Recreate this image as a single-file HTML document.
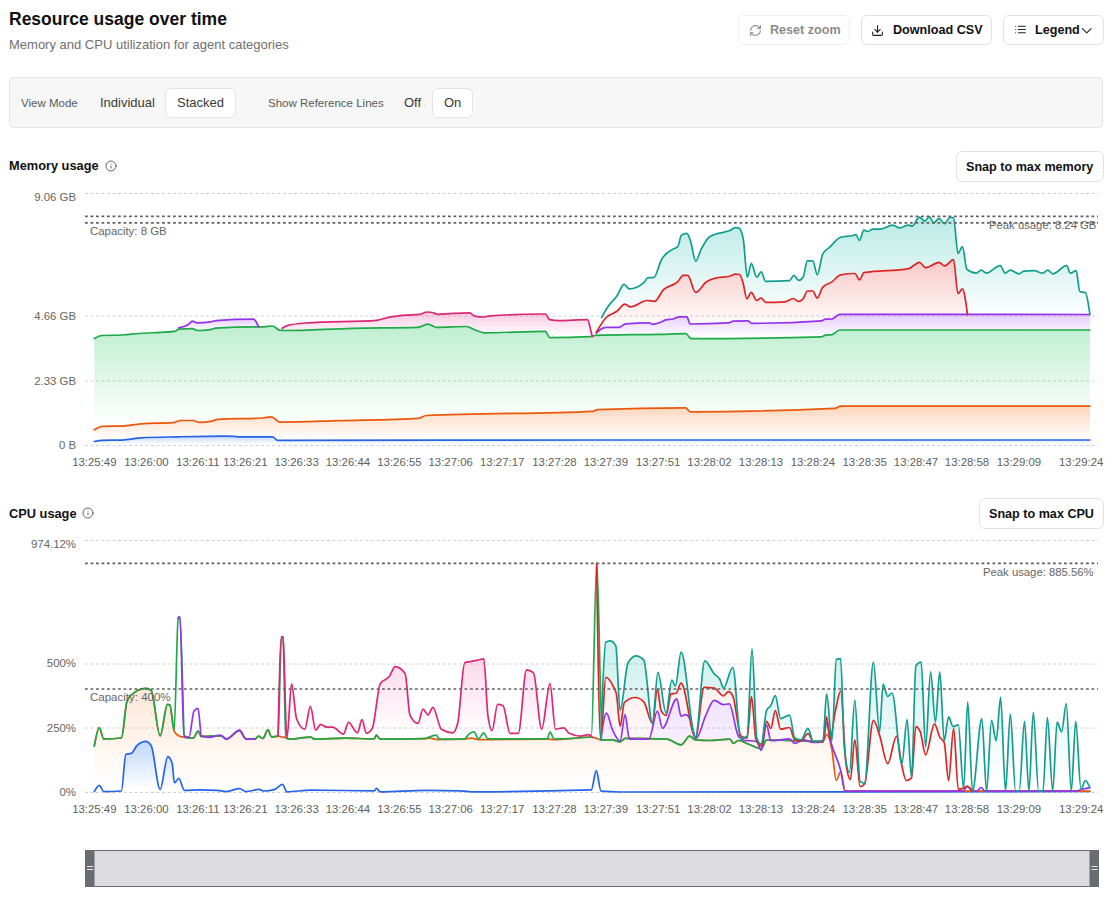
<!DOCTYPE html>
<html><head><meta charset="utf-8">
<style>
html,body{margin:0;padding:0;background:#fff;width:1116px;height:906px;overflow:hidden;position:relative;font-family:"Liberation Sans",sans-serif;}
.a{position:absolute;white-space:nowrap;}
.btn{position:absolute;box-sizing:border-box;border:1px solid #e2e2e2;border-radius:6px;background:#fff;font-weight:700;font-size:12.6px;color:#111;}
.btn span{position:absolute;white-space:nowrap;}
.yl{position:absolute;font-size:11.4px;color:#666;text-align:right;width:70px;left:6px;}
.xl{position:absolute;font-size:11.4px;color:#606060;transform:translateX(-50%);}
</style></head><body>
<!-- header -->
<div class="a" style="left:9px;top:9px;font-size:17.5px;font-weight:700;color:#111;">Resource usage over time</div>
<div class="a" style="left:9px;top:36.6px;font-size:13px;color:#707070;">Memory and CPU utilization for agent categories</div>

<div class="btn" style="left:738px;top:15px;width:112px;height:30px;border-color:#efefef;">
  <svg style="position:absolute;left:10px;top:7.6px" width="13" height="13" viewBox="0 0 24 24" fill="none" stroke="#8e8e8e" stroke-width="2" stroke-linecap="round" stroke-linejoin="round"><path d="M3 12a9 9 0 0 1 9-9 9.75 9.75 0 0 1 6.74 2.74L21 8"/><path d="M21 3v5h-5"/><path d="M21 12a9 9 0 0 1-9 9 9.75 9.75 0 0 1-6.74-2.74L3 16"/><path d="M8 16H3v5"/></svg>
  <span style="left:31px;top:7px;color:#8c8c8c;">Reset zoom</span>
</div>
<div class="btn" style="left:861px;top:15px;width:131px;height:30px;">
  <svg style="position:absolute;left:9.2px;top:8px" width="13" height="13" viewBox="0 0 24 24" fill="none" stroke="#222" stroke-width="2" stroke-linecap="round" stroke-linejoin="round"><path d="M21 15v4a2 2 0 0 1-2 2H5a2 2 0 0 1-2-2v-4"/><path d="M7 10l5 5 5-5"/><path d="M12 15V3"/></svg>
  <span style="left:31px;top:7px;">Download CSV</span>
</div>
<div class="btn" style="left:1003px;top:15px;width:101px;height:30px;">
  <svg style="position:absolute;left:10px;top:7.3px" width="13" height="13" viewBox="0 0 24 24" fill="none" stroke="#222" stroke-width="2" stroke-linecap="round" stroke-linejoin="round"><path d="M8 6h13M8 12h13M8 18h13M3 6h.01M3 12h.01M3 18h.01"/></svg>
  <span style="left:31px;top:7px;">Legend</span>
  <svg style="position:absolute;left:73.6px;top:6px" width="17.5" height="17.5" viewBox="0 0 24 24" fill="none" stroke="#222" stroke-width="1.5" stroke-linecap="round" stroke-linejoin="round"><path d="m6 9 6 6 6-6"/></svg>
</div>

<!-- control panel -->
<div class="a" style="left:9px;top:77px;width:1094px;height:51px;box-sizing:border-box;border:1px solid #e4e4e4;border-radius:5px;background:#f7f7f7;"></div>
<div class="a" style="left:21px;top:97px;font-size:11.5px;color:#5a5a5a;">View Mode</div>
<div class="a" style="left:100px;top:95px;font-size:13px;color:#3a3a3a;">Individual</div>
<div class="a" style="left:165px;top:88px;width:71px;height:30px;box-sizing:border-box;border:1px solid #e4e4e4;border-radius:6px;background:#fff;"></div>
<div class="a" style="left:177px;top:95px;font-size:13px;color:#3a3a3a;">Stacked</div>
<div class="a" style="left:268px;top:97px;font-size:11.5px;color:#5a5a5a;">Show Reference Lines</div>
<div class="a" style="left:404px;top:95px;font-size:13px;color:#3a3a3a;">Off</div>
<div class="a" style="left:432px;top:88px;width:41px;height:30px;box-sizing:border-box;border:1px solid #e4e4e4;border-radius:6px;background:#fff;"></div>
<div class="a" style="left:444px;top:95px;font-size:13px;color:#3a3a3a;">On</div>

<!-- memory header -->
<div class="a" style="left:9px;top:158px;font-size:12.8px;font-weight:700;color:#111;">Memory usage</div>
<svg class="a" style="left:105px;top:160px" width="12" height="12" viewBox="0 0 24 24" fill="none" stroke="#555" stroke-width="1.8" stroke-linecap="round" stroke-linejoin="round"><circle cx="12" cy="12" r="10"/><path d="M12 16v-4M12 8h.01"/></svg>
<div class="btn" style="left:956px;top:151px;width:148px;height:31px;"><span style="left:9px;top:7.8px;">Snap to max memory</span></div>

<!-- cpu header -->
<div class="a" style="left:9px;top:506px;font-size:12.8px;font-weight:700;color:#111;">CPU usage</div>
<svg class="a" style="left:82px;top:507px" width="12" height="12" viewBox="0 0 24 24" fill="none" stroke="#555" stroke-width="1.8" stroke-linecap="round" stroke-linejoin="round"><circle cx="12" cy="12" r="10"/><path d="M12 16v-4M12 8h.01"/></svg>
<div class="btn" style="left:979px;top:498px;width:125px;height:31px;"><span style="left:9px;top:7.8px;">Snap to max CPU</span></div>

<!-- CHARTS -->
<svg class="a" style="left:0;top:0" width="1116" height="906" viewBox="0 0 1116 906">
<g id="grid" stroke="#d0d0d0" stroke-width="1" stroke-dasharray="3 2.5">
  <path d="M85 193.5H1098M85 316H1098M85 381H1098M85 445.5H1098"/>
  <path d="M85 540.5H1098M85 664H1098M85 728H1098M85 792.5H1098"/>
</g>
<g><defs><linearGradient id="g_blue" x1="0" y1="0" x2="0" y2="1"><stop offset="0.05" stop-color="#3b82f6" stop-opacity="0.28"/><stop offset="0.95" stop-color="#3b82f6" stop-opacity="0"/></linearGradient><linearGradient id="c_blue" x1="0" y1="0" x2="0" y2="1"><stop offset="0.05" stop-color="#3b82f6" stop-opacity="0.3"/><stop offset="0.95" stop-color="#3b82f6" stop-opacity="0"/></linearGradient><linearGradient id="g_orange" x1="0" y1="0" x2="0" y2="1"><stop offset="0.05" stop-color="#f97316" stop-opacity="0.28"/><stop offset="0.95" stop-color="#f97316" stop-opacity="0"/></linearGradient><linearGradient id="c_orange" x1="0" y1="0" x2="0" y2="1"><stop offset="0.05" stop-color="#f97316" stop-opacity="0.16"/><stop offset="0.95" stop-color="#f97316" stop-opacity="0"/></linearGradient><linearGradient id="g_green" x1="0" y1="0" x2="0" y2="1"><stop offset="0.05" stop-color="#22c55e" stop-opacity="0.28"/><stop offset="0.95" stop-color="#22c55e" stop-opacity="0"/></linearGradient><linearGradient id="c_green" x1="0" y1="0" x2="0" y2="1"><stop offset="0.05" stop-color="#22c55e" stop-opacity="0.25"/><stop offset="0.95" stop-color="#22c55e" stop-opacity="0"/></linearGradient><linearGradient id="g_purple" x1="0" y1="0" x2="0" y2="1"><stop offset="0.05" stop-color="#a855f7" stop-opacity="0.28"/><stop offset="0.95" stop-color="#a855f7" stop-opacity="0"/></linearGradient><linearGradient id="c_purple" x1="0" y1="0" x2="0" y2="1"><stop offset="0.05" stop-color="#a855f7" stop-opacity="0.18"/><stop offset="0.95" stop-color="#a855f7" stop-opacity="0"/></linearGradient><linearGradient id="g_pink" x1="0" y1="0" x2="0" y2="1"><stop offset="0.05" stop-color="#ec4899" stop-opacity="0.28"/><stop offset="0.95" stop-color="#ec4899" stop-opacity="0"/></linearGradient><linearGradient id="c_pink" x1="0" y1="0" x2="0" y2="1"><stop offset="0.05" stop-color="#ec4899" stop-opacity="0.26"/><stop offset="0.95" stop-color="#ec4899" stop-opacity="0"/></linearGradient><linearGradient id="g_red" x1="0" y1="0" x2="0" y2="1"><stop offset="0.05" stop-color="#ef4444" stop-opacity="0.28"/><stop offset="0.95" stop-color="#ef4444" stop-opacity="0"/></linearGradient><linearGradient id="c_red" x1="0" y1="0" x2="0" y2="1"><stop offset="0.05" stop-color="#ef4444" stop-opacity="0.18"/><stop offset="0.95" stop-color="#ef4444" stop-opacity="0"/></linearGradient><linearGradient id="g_teal" x1="0" y1="0" x2="0" y2="1"><stop offset="0.05" stop-color="#14b8a6" stop-opacity="0.28"/><stop offset="0.95" stop-color="#14b8a6" stop-opacity="0"/></linearGradient><linearGradient id="c_teal" x1="0" y1="0" x2="0" y2="1"><stop offset="0.05" stop-color="#14b8a6" stop-opacity="0.21"/><stop offset="0.95" stop-color="#14b8a6" stop-opacity="0"/></linearGradient></defs><path d="M94.30 441.50 C97.03 440.93 99.77 440.36 102.50 440.30 C109.10 440.17 115.70 440.23 122.30 440.10 C128.53 439.97 134.77 438.14 141.00 437.80 C153.40 437.13 165.80 437.07 178.20 436.80 C193.77 436.46 209.33 436.10 224.90 436.10 C228.00 436.10 231.10 436.20 234.20 436.40 C235.77 436.50 237.33 436.80 238.90 436.80 C250.13 436.80 261.37 436.80 272.60 436.80 C274.17 436.80 275.73 440.30 277.30 440.30 C382.87 440.30 488.43 440.00 594.00 440.00 C759.30 440.00 924.60 440.00 1089.90 440.00 L1089.90 445.00 C758.03 445.00 426.17 445.00 94.30 445.00 Z" fill="url(#g_blue)" stroke="none"/><path d="M94.30 429.80 C97.03 428.08 99.77 426.36 102.50 426.30 C109.10 426.17 115.70 426.23 122.30 426.10 C128.53 425.97 134.77 424.26 141.00 423.80 C151.87 423.00 162.73 423.40 173.60 422.60 C175.93 422.43 178.27 420.50 180.60 420.50 C184.87 420.50 189.13 420.50 193.40 420.50 C195.33 420.50 197.27 422.40 199.20 422.40 C203.10 422.40 207.00 422.07 210.90 421.40 C213.23 421.00 215.57 419.44 217.90 419.30 C232.67 418.43 247.43 418.87 262.20 418.00 C265.30 417.82 268.40 416.80 271.50 416.80 C274.20 416.80 276.90 422.10 279.60 422.10 C299.73 422.10 319.87 421.14 340.00 420.60 C366.03 419.90 392.07 419.83 418.10 418.30 C420.80 418.14 423.50 415.64 426.20 415.50 C481.77 412.70 537.33 414.10 592.90 411.30 C594.47 411.22 596.03 409.66 597.60 409.60 C626.93 408.40 656.27 407.80 685.60 407.80 C687.13 407.80 688.67 411.80 690.20 411.80 C738.40 411.80 786.60 410.63 834.80 408.30 C836.73 408.21 838.67 406.10 840.60 406.10 C923.70 406.10 1006.80 406.10 1089.90 406.10 L1089.90 440.00 C924.60 440.00 759.30 440.00 594.00 440.00 C488.43 440.00 382.87 440.30 277.30 440.30 C275.73 440.30 274.17 436.80 272.60 436.80 C261.37 436.80 250.13 436.80 238.90 436.80 C237.33 436.80 235.77 436.50 234.20 436.40 C231.10 436.20 228.00 436.10 224.90 436.10 C209.33 436.10 193.77 436.46 178.20 436.80 C165.80 437.07 153.40 437.13 141.00 437.80 C134.77 438.14 128.53 439.97 122.30 440.10 C115.70 440.23 109.10 440.17 102.50 440.30 C99.77 440.36 97.03 440.93 94.30 441.50 Z" fill="url(#g_orange)" stroke="none"/><path d="M94.30 338.50 C96.87 337.06 99.43 335.62 102.00 335.50 C108.87 335.17 115.73 335.33 122.60 335.00 C128.00 334.74 133.40 333.91 138.80 333.50 C145.97 332.95 153.13 332.73 160.30 332.30 C165.07 332.01 169.83 332.00 174.60 331.40 C176.07 331.22 177.53 329.31 179.00 329.20 C183.50 328.87 188.00 328.70 192.50 328.70 C194.00 328.70 195.50 330.50 197.00 330.50 C201.47 330.50 205.93 330.20 210.40 329.60 C212.20 329.36 214.00 328.21 215.80 328.10 C228.93 327.30 242.07 326.90 255.20 326.90 C258.20 326.90 261.20 326.90 264.20 326.90 C266.60 326.90 269.00 326.00 271.40 326.00 C272.27 326.00 273.13 326.20 274.00 326.50 C275.80 327.12 277.60 329.84 279.40 330.10 C281.27 330.37 283.13 330.50 285.00 330.50 C307.23 330.50 329.47 328.82 351.70 328.30 C373.80 327.79 395.90 328.00 418.00 327.40 C421.27 327.31 424.53 324.20 427.80 324.20 C430.80 324.20 433.80 327.40 436.80 327.40 C446.67 327.40 456.53 326.50 466.40 326.50 C469.40 326.50 472.40 329.05 475.40 330.10 C478.37 331.14 481.33 332.80 484.30 332.80 C504.63 332.80 524.97 331.40 545.30 331.40 C546.77 331.40 548.23 337.60 549.70 337.60 C563.13 337.60 576.57 337.30 590.00 336.70 C591.80 336.62 593.60 335.36 595.40 335.30 C616.93 334.63 638.47 334.75 660.00 334.30 C668.60 334.12 677.20 333.70 685.80 333.70 C687.60 333.70 689.40 338.60 691.20 338.60 C734.57 338.60 777.93 338.03 821.30 336.90 C822.73 336.86 824.17 335.42 825.60 335.20 C827.73 334.87 829.87 335.03 832.00 334.70 C834.53 334.30 837.07 330.00 839.60 330.00 C923.03 330.00 1006.47 330.00 1089.90 330.00 L1089.90 406.10 C1006.80 406.10 923.70 406.10 840.60 406.10 C838.67 406.10 836.73 408.21 834.80 408.30 C786.60 410.63 738.40 411.80 690.20 411.80 C688.67 411.80 687.13 407.80 685.60 407.80 C656.27 407.80 626.93 408.40 597.60 409.60 C596.03 409.66 594.47 411.22 592.90 411.30 C537.33 414.10 481.77 412.70 426.20 415.50 C423.50 415.64 420.80 418.14 418.10 418.30 C392.07 419.83 366.03 419.90 340.00 420.60 C319.87 421.14 299.73 422.10 279.60 422.10 C276.90 422.10 274.20 416.80 271.50 416.80 C268.40 416.80 265.30 417.82 262.20 418.00 C247.43 418.87 232.67 418.43 217.90 419.30 C215.57 419.44 213.23 421.00 210.90 421.40 C207.00 422.07 203.10 422.40 199.20 422.40 C197.27 422.40 195.33 420.50 193.40 420.50 C189.13 420.50 184.87 420.50 180.60 420.50 C178.27 420.50 175.93 422.43 173.60 422.60 C162.73 423.40 151.87 423.00 141.00 423.80 C134.77 424.26 128.53 425.97 122.30 426.10 C115.70 426.23 109.10 426.17 102.50 426.30 C99.77 426.36 97.03 428.08 94.30 429.80 Z" fill="url(#g_green)" stroke="none"/><path d="M178.60 327.80 C181.73 327.26 184.87 326.73 188.00 324.70 C189.50 323.73 191.00 321.10 192.50 321.10 C194.00 321.10 195.50 322.80 197.00 322.80 C201.47 322.80 205.93 322.50 210.40 321.90 C212.20 321.66 214.00 320.73 215.80 320.60 C228.37 319.67 240.93 319.20 253.50 319.20 C254.33 319.20 255.17 320.22 256.00 321.50 C256.83 322.78 257.67 324.84 258.50 326.90 L258.50 326.90 C257.40 326.90 256.30 326.90 255.20 326.90 C242.07 326.90 228.93 327.30 215.80 328.10 C214.00 328.21 212.20 329.36 210.40 329.60 C205.93 330.20 201.47 330.50 197.00 330.50 C195.50 330.50 194.00 328.70 192.50 328.70 C188.00 328.70 183.50 328.87 179.00 329.20 C178.87 329.21 178.73 329.30 178.60 329.40 Z" fill="url(#g_purple)" stroke="none"/><path d="M596.30 333.20 C597.80 331.68 599.30 330.16 600.80 329.20 C602.57 328.08 604.33 327.40 606.10 327.40 C610.30 327.40 614.50 327.40 618.70 327.40 C621.07 327.40 623.43 323.98 625.80 323.80 C633.57 323.20 641.33 322.90 649.10 322.90 C650.30 322.90 651.50 324.30 652.70 324.30 C655.13 324.30 657.57 323.34 660.00 322.50 C662.17 321.75 664.33 320.17 666.50 319.70 C668.63 319.23 670.77 319.46 672.90 319.00 C675.07 318.53 677.23 316.90 679.40 316.90 C681.90 316.90 684.40 316.90 686.90 316.90 C687.97 316.90 689.03 324.00 690.10 324.00 C703.00 324.00 715.90 323.63 728.80 322.90 C730.23 322.82 731.67 321.28 733.10 321.20 C738.13 320.93 743.17 320.80 748.20 320.80 C749.27 320.80 750.33 323.30 751.40 323.30 C774.70 323.30 798.00 322.47 821.30 320.80 C822.73 320.70 824.17 319.29 825.60 319.20 C827.73 319.07 829.87 319.13 832.00 319.00 C834.53 318.84 837.07 314.30 839.60 314.30 C923.03 314.30 1006.47 314.40 1089.90 314.50 L1089.90 330.00 C1006.47 330.00 923.03 330.00 839.60 330.00 C837.07 330.00 834.53 334.30 832.00 334.70 C829.87 335.03 827.73 334.87 825.60 335.20 C824.17 335.42 822.73 336.86 821.30 336.90 C777.93 338.03 734.57 338.60 691.20 338.60 C689.40 338.60 687.60 333.70 685.80 333.70 C677.20 333.70 668.60 334.12 660.00 334.30 C638.77 334.75 617.53 335.02 596.30 335.29 Z" fill="url(#g_purple)" stroke="none"/><path d="M282.20 328.30 C283.87 327.18 285.53 326.06 287.20 325.60 C293.77 323.80 300.33 323.39 306.90 322.90 C330.20 321.17 353.50 322.03 376.80 320.30 C380.37 320.03 383.93 318.34 387.50 317.60 C393.47 316.36 399.43 315.76 405.40 315.20 C410.20 314.75 415.00 314.90 419.80 314.30 C422.20 314.00 424.60 312.00 427.00 312.00 C428.77 312.00 430.53 312.17 432.30 312.50 C434.10 312.84 435.90 314.30 437.70 314.30 C441.90 314.30 446.10 313.80 450.30 313.60 C456.87 313.29 463.43 312.90 470.00 312.90 C471.50 312.90 473.00 315.82 474.50 316.10 C477.77 316.70 481.03 317.00 484.30 317.00 C485.50 317.00 486.70 316.19 487.90 316.10 C505.83 314.70 523.77 314.00 541.70 314.00 C542.90 314.00 544.10 314.00 545.30 314.00 C546.77 314.00 548.23 319.43 549.70 319.70 C553.00 320.30 556.30 320.60 559.60 320.60 C568.87 320.60 578.13 319.70 587.40 319.70 C588.90 319.70 590.40 330.33 591.90 334.90 C592.10 335.51 592.30 336.10 592.50 336.70 L592.50 336.05 C591.67 336.36 590.83 336.66 590.00 336.70 C576.57 337.30 563.13 337.60 549.70 337.60 C548.23 337.60 546.77 331.40 545.30 331.40 C524.97 331.40 504.63 332.80 484.30 332.80 C481.33 332.80 478.37 331.14 475.40 330.10 C472.40 329.05 469.40 326.50 466.40 326.50 C456.53 326.50 446.67 327.40 436.80 327.40 C433.80 327.40 430.80 324.20 427.80 324.20 C424.53 324.20 421.27 327.31 418.00 327.40 C395.90 328.00 373.80 327.79 351.70 328.30 C329.47 328.82 307.23 330.50 285.00 330.50 C284.07 330.50 283.13 330.40 282.20 330.30 Z" fill="url(#g_pink)" stroke="none"/><path d="M596.30 332.30 C599.57 326.64 602.83 320.98 606.10 317.50 C609.70 313.67 613.30 314.04 616.90 311.30 C619.57 309.27 622.23 304.10 624.90 304.10 C626.70 304.10 628.50 306.80 630.30 306.80 C635.97 306.80 641.63 300.50 647.30 300.50 C649.70 300.50 652.10 301.40 654.50 301.40 C657.50 301.40 660.50 292.74 663.50 289.70 C668.27 284.87 673.03 286.47 677.80 281.70 C679.60 279.90 681.40 275.40 683.20 275.40 C684.70 275.40 686.20 275.40 687.70 275.40 C690.37 275.40 693.03 292.40 695.70 292.40 C699.30 292.40 702.90 284.11 706.50 281.70 C709.47 279.71 712.43 278.84 715.40 278.10 C720.20 276.90 725.00 277.50 729.80 276.30 C731.60 275.85 733.40 274.20 735.20 274.20 C736.67 274.20 738.13 274.30 739.60 274.50 C740.80 274.66 742.00 279.47 743.20 283.50 C744.40 287.53 745.60 298.70 746.80 298.70 C748.30 298.70 749.80 292.40 751.30 292.40 C753.10 292.40 754.90 300.50 756.70 300.50 C758.17 300.50 759.63 297.80 761.10 297.80 C762.60 297.80 764.10 302.30 765.60 302.30 C772.07 302.30 778.53 302.13 785.00 301.80 C787.70 301.66 790.40 298.50 793.10 298.50 C794.87 298.50 796.63 301.40 798.40 301.40 C799.90 301.40 801.40 300.63 802.90 299.10 C804.40 297.57 805.90 291.00 807.40 291.00 C809.20 291.00 811.00 291.00 812.80 291.00 C814.30 291.00 815.80 298.20 817.30 298.20 C819.07 298.20 820.83 289.48 822.60 287.40 C825.60 283.87 828.60 284.18 831.60 282.10 C834.60 280.02 837.60 275.49 840.60 274.90 C845.37 273.97 850.13 273.50 854.90 273.50 C856.40 273.50 857.90 279.90 859.40 279.90 C860.90 279.90 862.40 272.97 863.90 272.70 C878.83 269.97 893.77 271.33 908.70 268.60 C912.27 267.95 915.83 262.30 919.40 262.30 C921.50 262.30 923.60 267.70 925.70 267.70 C930.17 267.70 934.63 262.30 939.10 262.30 C940.90 262.30 942.70 265.90 944.50 265.90 C947.50 265.90 950.50 259.70 953.50 259.70 C955.00 259.70 956.50 293.70 958.00 293.70 C959.47 293.70 960.93 288.90 962.40 288.90 C964.10 288.90 965.80 301.75 967.50 314.60 L967.50 314.40 C924.87 314.35 882.23 314.30 839.60 314.30 C837.07 314.30 834.53 318.84 832.00 319.00 C829.87 319.13 827.73 319.07 825.60 319.20 C824.17 319.29 822.73 320.70 821.30 320.80 C798.00 322.47 774.70 323.30 751.40 323.30 C750.33 323.30 749.27 320.80 748.20 320.80 C743.17 320.80 738.13 320.93 733.10 321.20 C731.67 321.28 730.23 322.82 728.80 322.90 C715.90 323.63 703.00 324.00 690.10 324.00 C689.03 324.00 687.97 316.90 686.90 316.90 C684.40 316.90 681.90 316.90 679.40 316.90 C677.23 316.90 675.07 318.53 672.90 319.00 C670.77 319.46 668.63 319.23 666.50 319.70 C664.33 320.17 662.17 321.75 660.00 322.50 C657.57 323.34 655.13 324.30 652.70 324.30 C651.50 324.30 650.30 322.90 649.10 322.90 C641.33 322.90 633.57 323.20 625.80 323.80 C623.43 323.98 621.07 327.40 618.70 327.40 C614.50 327.40 610.30 327.40 606.10 327.40 C604.33 327.40 602.57 328.08 600.80 329.20 C599.30 330.16 597.80 331.68 596.30 333.20 Z" fill="url(#g_red)" stroke="none"/><path d="M601.60 317.50 C603.70 313.72 605.80 309.94 607.90 306.80 C610.90 302.32 613.90 300.33 616.90 296.00 C619.27 292.59 621.63 284.40 624.00 284.40 C625.80 284.40 627.60 288.90 629.40 288.90 C634.20 288.90 639.00 286.80 643.80 282.60 C645.27 281.32 646.73 277.70 648.20 277.70 C650.00 277.70 651.80 277.70 653.60 277.70 C656.30 277.70 659.00 263.87 661.70 259.30 C665.27 253.27 668.83 251.69 672.40 249.40 C674.20 248.24 676.00 248.50 677.80 246.70 C679.00 245.50 680.20 235.90 681.40 235.10 C683.20 233.90 685.00 233.30 686.80 233.30 C688.00 233.30 689.20 237.18 690.40 240.50 C692.17 245.38 693.93 261.10 695.70 261.10 C697.50 261.10 699.30 252.87 701.10 249.40 C703.50 244.77 705.90 240.23 708.30 237.80 C710.67 235.40 713.03 235.20 715.40 234.20 C720.20 232.17 725.00 232.87 729.80 230.60 C731.60 229.75 733.40 227.60 735.20 227.60 C736.37 227.60 737.53 227.70 738.70 227.90 C740.20 228.16 741.70 231.50 743.20 238.70 C744.57 245.26 745.93 277.20 747.30 277.20 C748.63 277.20 749.97 263.40 751.30 263.40 C753.10 263.40 754.90 277.20 756.70 277.20 C758.17 277.20 759.63 271.80 761.10 271.80 C762.60 271.80 764.10 281.30 765.60 281.30 C773.57 281.30 781.53 281.07 789.50 280.60 C791.00 280.51 792.50 275.30 794.00 275.30 C795.47 275.30 796.93 280.30 798.40 280.30 C799.90 280.30 801.40 279.40 802.90 277.60 C804.40 275.80 805.90 260.90 807.40 260.90 C809.20 260.90 811.00 260.90 812.80 260.90 C814.30 260.90 815.80 274.90 817.30 274.90 C819.07 274.90 820.83 257.83 822.60 254.30 C825.00 249.50 827.40 249.41 829.80 247.10 C833.40 243.63 837.00 238.34 840.60 237.30 C844.77 236.10 848.93 236.70 853.10 235.50 C854.00 235.24 854.90 234.60 855.80 234.60 C857.00 234.60 858.20 240.50 859.40 240.50 C860.90 240.50 862.40 230.10 863.90 230.10 C865.07 230.10 866.23 231.50 867.40 231.50 C869.20 231.50 871.00 229.20 872.80 229.20 C875.20 229.20 877.60 229.20 880.00 229.20 C884.17 229.20 888.33 225.10 892.50 225.10 C894.90 225.10 897.30 227.90 899.70 227.90 C902.70 227.90 905.70 225.10 908.70 225.10 C909.87 225.10 911.03 226.10 912.20 226.10 C914.60 226.10 917.00 217.20 919.40 217.20 C921.20 217.20 923.00 221.10 924.80 221.10 C926.30 221.10 927.80 216.60 929.30 216.60 C930.77 216.60 932.23 222.90 933.70 222.90 C935.50 222.90 937.30 218.40 939.10 218.40 C940.90 218.40 942.70 223.80 944.50 223.80 C946.30 223.80 948.10 217.50 949.90 217.50 C951.10 217.50 952.30 217.50 953.50 217.50 C955.00 217.50 956.50 253.40 958.00 253.40 C959.47 253.40 960.93 246.60 962.40 246.60 C963.90 246.60 965.40 268.19 966.90 269.40 C970.03 271.93 973.17 273.20 976.30 273.20 C977.97 273.20 979.63 270.10 981.30 270.10 C982.97 270.10 984.63 273.20 986.30 273.20 C990.93 273.20 995.57 265.70 1000.20 265.70 C1001.87 265.70 1003.53 273.20 1005.20 273.20 C1006.87 273.20 1008.53 270.10 1010.20 270.10 C1013.13 270.10 1016.07 273.80 1019.00 273.80 C1020.67 273.80 1022.33 271.23 1024.00 271.10 C1027.33 270.83 1030.67 270.70 1034.00 270.70 C1036.93 270.70 1039.87 273.20 1042.80 273.20 C1044.47 273.20 1046.13 270.10 1047.80 270.10 C1049.47 270.10 1051.13 273.80 1052.80 273.80 C1057.40 273.80 1062.00 265.70 1066.60 265.70 C1067.87 265.70 1069.13 273.20 1070.40 273.20 C1072.30 273.20 1074.20 270.70 1076.10 270.70 C1077.33 270.70 1078.57 290.84 1079.80 291.40 C1081.70 292.27 1083.60 291.83 1085.50 292.70 C1086.97 293.37 1088.43 303.98 1089.90 314.60 L1089.90 314.50 C1049.10 314.55 1008.30 314.60 967.50 314.60 C965.80 314.60 964.10 288.90 962.40 288.90 C960.93 288.90 959.47 293.70 958.00 293.70 C956.50 293.70 955.00 259.70 953.50 259.70 C950.50 259.70 947.50 265.90 944.50 265.90 C942.70 265.90 940.90 262.30 939.10 262.30 C934.63 262.30 930.17 267.70 925.70 267.70 C923.60 267.70 921.50 262.30 919.40 262.30 C915.83 262.30 912.27 267.95 908.70 268.60 C893.77 271.33 878.83 269.97 863.90 272.70 C862.40 272.97 860.90 279.90 859.40 279.90 C857.90 279.90 856.40 273.50 854.90 273.50 C850.13 273.50 845.37 273.97 840.60 274.90 C837.60 275.49 834.60 280.02 831.60 282.10 C828.60 284.18 825.60 283.87 822.60 287.40 C820.83 289.48 819.07 298.20 817.30 298.20 C815.80 298.20 814.30 291.00 812.80 291.00 C811.00 291.00 809.20 291.00 807.40 291.00 C805.90 291.00 804.40 297.57 802.90 299.10 C801.40 300.63 799.90 301.40 798.40 301.40 C796.63 301.40 794.87 298.50 793.10 298.50 C790.40 298.50 787.70 301.66 785.00 301.80 C778.53 302.13 772.07 302.30 765.60 302.30 C764.10 302.30 762.60 297.80 761.10 297.80 C759.63 297.80 758.17 300.50 756.70 300.50 C754.90 300.50 753.10 292.40 751.30 292.40 C749.80 292.40 748.30 298.70 746.80 298.70 C745.60 298.70 744.40 287.53 743.20 283.50 C742.00 279.47 740.80 274.66 739.60 274.50 C738.13 274.30 736.67 274.20 735.20 274.20 C733.40 274.20 731.60 275.85 729.80 276.30 C725.00 277.50 720.20 276.90 715.40 278.10 C712.43 278.84 709.47 279.71 706.50 281.70 C702.90 284.11 699.30 292.40 695.70 292.40 C693.03 292.40 690.37 275.40 687.70 275.40 C686.20 275.40 684.70 275.40 683.20 275.40 C681.40 275.40 679.60 279.90 677.80 281.70 C673.03 286.47 668.27 284.87 663.50 289.70 C660.50 292.74 657.50 301.40 654.50 301.40 C652.10 301.40 649.70 300.50 647.30 300.50 C641.63 300.50 635.97 306.80 630.30 306.80 C628.50 306.80 626.70 304.10 624.90 304.10 C622.23 304.10 619.57 309.27 616.90 311.30 C613.30 314.04 609.70 313.37 606.10 317.50 C604.60 319.22 603.10 321.76 601.60 324.30 Z" fill="url(#g_teal)" stroke="none"/><path d="M94.30 441.50 C97.03 440.93 99.77 440.36 102.50 440.30 C109.10 440.17 115.70 440.23 122.30 440.10 C128.53 439.97 134.77 438.14 141.00 437.80 C153.40 437.13 165.80 437.07 178.20 436.80 C193.77 436.46 209.33 436.10 224.90 436.10 C228.00 436.10 231.10 436.20 234.20 436.40 C235.77 436.50 237.33 436.80 238.90 436.80 C250.13 436.80 261.37 436.80 272.60 436.80 C274.17 436.80 275.73 440.30 277.30 440.30 C382.87 440.30 488.43 440.00 594.00 440.00 C759.30 440.00 924.60 440.00 1089.90 440.00" fill="none" stroke="#2563eb" stroke-width="1.7" stroke-linejoin="round" stroke-linecap="round"/><path d="M94.30 429.80 C97.03 428.08 99.77 426.36 102.50 426.30 C109.10 426.17 115.70 426.23 122.30 426.10 C128.53 425.97 134.77 424.26 141.00 423.80 C151.87 423.00 162.73 423.40 173.60 422.60 C175.93 422.43 178.27 420.50 180.60 420.50 C184.87 420.50 189.13 420.50 193.40 420.50 C195.33 420.50 197.27 422.40 199.20 422.40 C203.10 422.40 207.00 422.07 210.90 421.40 C213.23 421.00 215.57 419.44 217.90 419.30 C232.67 418.43 247.43 418.87 262.20 418.00 C265.30 417.82 268.40 416.80 271.50 416.80 C274.20 416.80 276.90 422.10 279.60 422.10 C299.73 422.10 319.87 421.14 340.00 420.60 C366.03 419.90 392.07 419.83 418.10 418.30 C420.80 418.14 423.50 415.64 426.20 415.50 C481.77 412.70 537.33 414.10 592.90 411.30 C594.47 411.22 596.03 409.66 597.60 409.60 C626.93 408.40 656.27 407.80 685.60 407.80 C687.13 407.80 688.67 411.80 690.20 411.80 C738.40 411.80 786.60 410.63 834.80 408.30 C836.73 408.21 838.67 406.10 840.60 406.10 C923.70 406.10 1006.80 406.10 1089.90 406.10" fill="none" stroke="#ea580c" stroke-width="1.7" stroke-linejoin="round" stroke-linecap="round"/><path d="M94.30 338.50 C96.87 337.06 99.43 335.62 102.00 335.50 C108.87 335.17 115.73 335.33 122.60 335.00 C128.00 334.74 133.40 333.91 138.80 333.50 C145.97 332.95 153.13 332.73 160.30 332.30 C165.07 332.01 169.83 332.00 174.60 331.40 C176.07 331.22 177.53 329.31 179.00 329.20 C183.50 328.87 188.00 328.70 192.50 328.70 C194.00 328.70 195.50 330.50 197.00 330.50 C201.47 330.50 205.93 330.20 210.40 329.60 C212.20 329.36 214.00 328.21 215.80 328.10 C228.93 327.30 242.07 326.90 255.20 326.90 C258.20 326.90 261.20 326.90 264.20 326.90 C266.60 326.90 269.00 326.00 271.40 326.00 C272.27 326.00 273.13 326.20 274.00 326.50 C275.80 327.12 277.60 329.84 279.40 330.10 C281.27 330.37 283.13 330.50 285.00 330.50 C307.23 330.50 329.47 328.82 351.70 328.30 C373.80 327.79 395.90 328.00 418.00 327.40 C421.27 327.31 424.53 324.20 427.80 324.20 C430.80 324.20 433.80 327.40 436.80 327.40 C446.67 327.40 456.53 326.50 466.40 326.50 C469.40 326.50 472.40 329.05 475.40 330.10 C478.37 331.14 481.33 332.80 484.30 332.80 C504.63 332.80 524.97 331.40 545.30 331.40 C546.77 331.40 548.23 337.60 549.70 337.60 C563.13 337.60 576.57 337.30 590.00 336.70 C591.80 336.62 593.60 335.36 595.40 335.30 C616.93 334.63 638.47 334.75 660.00 334.30 C668.60 334.12 677.20 333.70 685.80 333.70 C687.60 333.70 689.40 338.60 691.20 338.60 C734.57 338.60 777.93 338.03 821.30 336.90 C822.73 336.86 824.17 335.42 825.60 335.20 C827.73 334.87 829.87 335.03 832.00 334.70 C834.53 334.30 837.07 330.00 839.60 330.00 C923.03 330.00 1006.47 330.00 1089.90 330.00" fill="none" stroke="#1faa4a" stroke-width="1.7" stroke-linejoin="round" stroke-linecap="round"/><path d="M178.60 327.80 C181.73 327.26 184.87 326.73 188.00 324.70 C189.50 323.73 191.00 321.10 192.50 321.10 C194.00 321.10 195.50 322.80 197.00 322.80 C201.47 322.80 205.93 322.50 210.40 321.90 C212.20 321.66 214.00 320.73 215.80 320.60 C228.37 319.67 240.93 319.20 253.50 319.20 C254.33 319.20 255.17 320.22 256.00 321.50 C256.83 322.78 257.67 324.84 258.50 326.90" fill="none" stroke="#9333ea" stroke-width="1.7" stroke-linejoin="round" stroke-linecap="round"/><path d="M596.30 333.20 C597.80 331.68 599.30 330.16 600.80 329.20 C602.57 328.08 604.33 327.40 606.10 327.40 C610.30 327.40 614.50 327.40 618.70 327.40 C621.07 327.40 623.43 323.98 625.80 323.80 C633.57 323.20 641.33 322.90 649.10 322.90 C650.30 322.90 651.50 324.30 652.70 324.30 C655.13 324.30 657.57 323.34 660.00 322.50 C662.17 321.75 664.33 320.17 666.50 319.70 C668.63 319.23 670.77 319.46 672.90 319.00 C675.07 318.53 677.23 316.90 679.40 316.90 C681.90 316.90 684.40 316.90 686.90 316.90 C687.97 316.90 689.03 324.00 690.10 324.00 C703.00 324.00 715.90 323.63 728.80 322.90 C730.23 322.82 731.67 321.28 733.10 321.20 C738.13 320.93 743.17 320.80 748.20 320.80 C749.27 320.80 750.33 323.30 751.40 323.30 C774.70 323.30 798.00 322.47 821.30 320.80 C822.73 320.70 824.17 319.29 825.60 319.20 C827.73 319.07 829.87 319.13 832.00 319.00 C834.53 318.84 837.07 314.30 839.60 314.30 C923.03 314.30 1006.47 314.40 1089.90 314.50" fill="none" stroke="#9333ea" stroke-width="1.7" stroke-linejoin="round" stroke-linecap="round"/><path d="M282.20 328.30 C283.87 327.18 285.53 326.06 287.20 325.60 C293.77 323.80 300.33 323.39 306.90 322.90 C330.20 321.17 353.50 322.03 376.80 320.30 C380.37 320.03 383.93 318.34 387.50 317.60 C393.47 316.36 399.43 315.76 405.40 315.20 C410.20 314.75 415.00 314.90 419.80 314.30 C422.20 314.00 424.60 312.00 427.00 312.00 C428.77 312.00 430.53 312.17 432.30 312.50 C434.10 312.84 435.90 314.30 437.70 314.30 C441.90 314.30 446.10 313.80 450.30 313.60 C456.87 313.29 463.43 312.90 470.00 312.90 C471.50 312.90 473.00 315.82 474.50 316.10 C477.77 316.70 481.03 317.00 484.30 317.00 C485.50 317.00 486.70 316.19 487.90 316.10 C505.83 314.70 523.77 314.00 541.70 314.00 C542.90 314.00 544.10 314.00 545.30 314.00 C546.77 314.00 548.23 319.43 549.70 319.70 C553.00 320.30 556.30 320.60 559.60 320.60 C568.87 320.60 578.13 319.70 587.40 319.70 C588.90 319.70 590.40 330.33 591.90 334.90 C592.10 335.51 592.30 336.10 592.50 336.70" fill="none" stroke="#db2777" stroke-width="1.7" stroke-linejoin="round" stroke-linecap="round"/><path d="M596.30 332.30 C599.57 326.64 602.83 320.98 606.10 317.50 C609.70 313.67 613.30 314.04 616.90 311.30 C619.57 309.27 622.23 304.10 624.90 304.10 C626.70 304.10 628.50 306.80 630.30 306.80 C635.97 306.80 641.63 300.50 647.30 300.50 C649.70 300.50 652.10 301.40 654.50 301.40 C657.50 301.40 660.50 292.74 663.50 289.70 C668.27 284.87 673.03 286.47 677.80 281.70 C679.60 279.90 681.40 275.40 683.20 275.40 C684.70 275.40 686.20 275.40 687.70 275.40 C690.37 275.40 693.03 292.40 695.70 292.40 C699.30 292.40 702.90 284.11 706.50 281.70 C709.47 279.71 712.43 278.84 715.40 278.10 C720.20 276.90 725.00 277.50 729.80 276.30 C731.60 275.85 733.40 274.20 735.20 274.20 C736.67 274.20 738.13 274.30 739.60 274.50 C740.80 274.66 742.00 279.47 743.20 283.50 C744.40 287.53 745.60 298.70 746.80 298.70 C748.30 298.70 749.80 292.40 751.30 292.40 C753.10 292.40 754.90 300.50 756.70 300.50 C758.17 300.50 759.63 297.80 761.10 297.80 C762.60 297.80 764.10 302.30 765.60 302.30 C772.07 302.30 778.53 302.13 785.00 301.80 C787.70 301.66 790.40 298.50 793.10 298.50 C794.87 298.50 796.63 301.40 798.40 301.40 C799.90 301.40 801.40 300.63 802.90 299.10 C804.40 297.57 805.90 291.00 807.40 291.00 C809.20 291.00 811.00 291.00 812.80 291.00 C814.30 291.00 815.80 298.20 817.30 298.20 C819.07 298.20 820.83 289.48 822.60 287.40 C825.60 283.87 828.60 284.18 831.60 282.10 C834.60 280.02 837.60 275.49 840.60 274.90 C845.37 273.97 850.13 273.50 854.90 273.50 C856.40 273.50 857.90 279.90 859.40 279.90 C860.90 279.90 862.40 272.97 863.90 272.70 C878.83 269.97 893.77 271.33 908.70 268.60 C912.27 267.95 915.83 262.30 919.40 262.30 C921.50 262.30 923.60 267.70 925.70 267.70 C930.17 267.70 934.63 262.30 939.10 262.30 C940.90 262.30 942.70 265.90 944.50 265.90 C947.50 265.90 950.50 259.70 953.50 259.70 C955.00 259.70 956.50 293.70 958.00 293.70 C959.47 293.70 960.93 288.90 962.40 288.90 C964.10 288.90 965.80 301.75 967.50 314.60" fill="none" stroke="#dc2626" stroke-width="1.7" stroke-linejoin="round" stroke-linecap="round"/><path d="M601.60 317.50 C603.70 313.72 605.80 309.94 607.90 306.80 C610.90 302.32 613.90 300.33 616.90 296.00 C619.27 292.59 621.63 284.40 624.00 284.40 C625.80 284.40 627.60 288.90 629.40 288.90 C634.20 288.90 639.00 286.80 643.80 282.60 C645.27 281.32 646.73 277.70 648.20 277.70 C650.00 277.70 651.80 277.70 653.60 277.70 C656.30 277.70 659.00 263.87 661.70 259.30 C665.27 253.27 668.83 251.69 672.40 249.40 C674.20 248.24 676.00 248.50 677.80 246.70 C679.00 245.50 680.20 235.90 681.40 235.10 C683.20 233.90 685.00 233.30 686.80 233.30 C688.00 233.30 689.20 237.18 690.40 240.50 C692.17 245.38 693.93 261.10 695.70 261.10 C697.50 261.10 699.30 252.87 701.10 249.40 C703.50 244.77 705.90 240.23 708.30 237.80 C710.67 235.40 713.03 235.20 715.40 234.20 C720.20 232.17 725.00 232.87 729.80 230.60 C731.60 229.75 733.40 227.60 735.20 227.60 C736.37 227.60 737.53 227.70 738.70 227.90 C740.20 228.16 741.70 231.50 743.20 238.70 C744.57 245.26 745.93 277.20 747.30 277.20 C748.63 277.20 749.97 263.40 751.30 263.40 C753.10 263.40 754.90 277.20 756.70 277.20 C758.17 277.20 759.63 271.80 761.10 271.80 C762.60 271.80 764.10 281.30 765.60 281.30 C773.57 281.30 781.53 281.07 789.50 280.60 C791.00 280.51 792.50 275.30 794.00 275.30 C795.47 275.30 796.93 280.30 798.40 280.30 C799.90 280.30 801.40 279.40 802.90 277.60 C804.40 275.80 805.90 260.90 807.40 260.90 C809.20 260.90 811.00 260.90 812.80 260.90 C814.30 260.90 815.80 274.90 817.30 274.90 C819.07 274.90 820.83 257.83 822.60 254.30 C825.00 249.50 827.40 249.41 829.80 247.10 C833.40 243.63 837.00 238.34 840.60 237.30 C844.77 236.10 848.93 236.70 853.10 235.50 C854.00 235.24 854.90 234.60 855.80 234.60 C857.00 234.60 858.20 240.50 859.40 240.50 C860.90 240.50 862.40 230.10 863.90 230.10 C865.07 230.10 866.23 231.50 867.40 231.50 C869.20 231.50 871.00 229.20 872.80 229.20 C875.20 229.20 877.60 229.20 880.00 229.20 C884.17 229.20 888.33 225.10 892.50 225.10 C894.90 225.10 897.30 227.90 899.70 227.90 C902.70 227.90 905.70 225.10 908.70 225.10 C909.87 225.10 911.03 226.10 912.20 226.10 C914.60 226.10 917.00 217.20 919.40 217.20 C921.20 217.20 923.00 221.10 924.80 221.10 C926.30 221.10 927.80 216.60 929.30 216.60 C930.77 216.60 932.23 222.90 933.70 222.90 C935.50 222.90 937.30 218.40 939.10 218.40 C940.90 218.40 942.70 223.80 944.50 223.80 C946.30 223.80 948.10 217.50 949.90 217.50 C951.10 217.50 952.30 217.50 953.50 217.50 C955.00 217.50 956.50 253.40 958.00 253.40 C959.47 253.40 960.93 246.60 962.40 246.60 C963.90 246.60 965.40 268.19 966.90 269.40 C970.03 271.93 973.17 273.20 976.30 273.20 C977.97 273.20 979.63 270.10 981.30 270.10 C982.97 270.10 984.63 273.20 986.30 273.20 C990.93 273.20 995.57 265.70 1000.20 265.70 C1001.87 265.70 1003.53 273.20 1005.20 273.20 C1006.87 273.20 1008.53 270.10 1010.20 270.10 C1013.13 270.10 1016.07 273.80 1019.00 273.80 C1020.67 273.80 1022.33 271.23 1024.00 271.10 C1027.33 270.83 1030.67 270.70 1034.00 270.70 C1036.93 270.70 1039.87 273.20 1042.80 273.20 C1044.47 273.20 1046.13 270.10 1047.80 270.10 C1049.47 270.10 1051.13 273.80 1052.80 273.80 C1057.40 273.80 1062.00 265.70 1066.60 265.70 C1067.87 265.70 1069.13 273.20 1070.40 273.20 C1072.30 273.20 1074.20 270.70 1076.10 270.70 C1077.33 270.70 1078.57 290.84 1079.80 291.40 C1081.70 292.27 1083.60 291.83 1085.50 292.70 C1086.97 293.37 1088.43 303.98 1089.90 314.60" fill="none" stroke="#129e8e" stroke-width="1.7" stroke-linejoin="round" stroke-linecap="round"/></g>
<g><path d="M94.30 791.60 C95.97 788.50 97.63 785.40 99.30 785.40 C100.80 785.40 102.30 791.60 103.80 791.60 C109.67 791.60 115.53 791.40 121.40 791.00 C122.87 790.90 124.33 755.08 125.80 754.50 C127.67 753.77 129.53 754.13 131.40 753.40 C133.23 752.68 135.07 747.53 136.90 745.70 C139.83 742.77 142.77 741.30 145.70 741.30 C147.53 741.30 149.37 742.77 151.20 745.70 C154.17 750.45 157.13 789.40 160.10 789.40 C162.67 789.40 165.23 756.70 167.80 756.70 C169.27 756.70 170.73 758.93 172.20 763.40 C172.93 765.63 173.67 782.80 174.40 782.80 C175.87 782.80 177.33 778.40 178.80 778.40 C180.63 778.40 182.47 790.30 184.30 790.30 C189.47 790.30 194.63 789.80 199.80 789.80 C205.67 789.80 211.53 789.97 217.40 790.30 C220.37 790.47 223.33 791.60 226.30 791.60 C230.70 791.60 235.10 788.70 239.50 788.70 C241.70 788.70 243.90 791.60 246.10 791.60 C250.53 791.60 254.97 789.40 259.40 789.40 C260.87 789.40 262.33 791.00 263.80 791.00 C267.47 791.00 271.13 790.47 274.80 789.40 C277.37 788.65 279.93 784.40 282.50 784.40 C283.97 784.40 285.43 791.80 286.90 791.80 C294.83 791.80 302.77 790.20 310.70 790.20 C331.90 790.20 353.10 790.80 374.30 790.80 C374.97 790.80 375.63 788.40 376.30 788.40 C377.63 788.40 378.97 791.80 380.30 791.80 C395.53 791.80 410.77 790.40 426.00 790.40 C437.23 790.40 448.47 790.53 459.70 790.80 C464.80 790.92 469.90 791.80 475.00 791.80 C513.77 791.80 552.53 791.17 591.30 789.90 C592.97 789.85 594.63 770.60 596.30 770.60 C597.87 770.60 599.43 791.07 601.00 791.20 C607.33 791.73 613.67 792.00 620.00 792.00 C776.63 792.00 933.27 791.75 1089.90 791.50 L1089.90 792.00 C758.03 792.00 426.17 792.00 94.30 792.00 Z" fill="url(#c_blue)" stroke="none"/><path d="M94.30 746.10 C95.97 736.85 97.63 727.60 99.30 727.60 C100.80 727.60 102.30 739.10 103.80 739.10 C109.67 739.10 115.53 738.73 121.40 738.00 C123.23 737.77 125.07 706.88 126.90 701.50 C128.40 697.10 129.90 696.28 131.40 694.90 C136.17 690.50 140.93 688.30 145.70 688.30 C147.53 688.30 149.37 689.03 151.20 690.50 C154.17 692.87 157.13 735.80 160.10 735.80 C162.57 735.80 165.03 704.30 167.50 704.30 C168.30 704.30 169.10 704.57 169.90 705.10 C171.30 706.03 172.70 727.83 174.10 730.80 C175.73 734.27 177.37 735.21 179.00 736.00 C180.93 736.93 182.87 737.05 184.80 737.40 C187.57 737.90 190.33 738.20 193.10 738.20 C194.77 738.20 196.43 731.50 198.10 731.50 C199.20 731.50 200.30 736.60 201.40 736.60 C208.23 736.60 215.07 735.80 221.90 735.80 C223.37 735.80 224.83 739.10 226.30 739.10 C230.70 739.10 235.10 730.70 239.50 730.70 C241.70 730.70 243.90 739.10 246.10 739.10 C249.07 739.10 252.03 739.10 255.00 739.10 C256.20 739.10 257.40 736.20 258.60 736.20 C260.03 736.20 261.47 738.40 262.90 738.40 C264.57 738.40 266.23 729.80 267.90 729.80 C269.10 729.80 270.30 736.90 271.50 736.90 C273.67 736.90 275.83 736.20 278.00 736.20 C279.33 736.20 280.67 736.76 282.00 737.00 C283.27 737.23 284.53 737.23 285.80 737.60 C287.00 737.95 288.20 739.10 289.40 739.10 C296.50 739.10 303.60 737.20 310.70 737.20 C312.03 737.20 313.37 739.20 314.70 739.20 C324.63 739.20 334.57 738.20 344.50 738.20 C354.43 738.20 364.37 738.80 374.30 738.80 C374.97 738.80 375.63 735.20 376.30 735.20 C377.63 735.20 378.97 739.20 380.30 739.20 C394.87 739.20 409.43 739.00 424.00 738.60 C425.97 738.55 427.93 738.20 429.90 738.20 C432.57 738.20 435.23 739.60 437.90 739.60 C446.50 739.60 455.10 739.47 463.70 739.20 C466.33 739.12 468.97 738.20 471.60 738.20 C473.83 738.20 476.07 739.60 478.30 739.60 C481.50 739.60 484.70 739.60 487.90 739.60 C507.67 739.60 527.43 739.20 547.20 739.20 C549.50 739.20 551.80 739.60 554.10 739.60 C566.50 739.60 578.90 737.00 591.30 737.00 C593.13 737.00 594.97 737.97 596.80 738.50 C598.63 739.03 600.47 740.20 602.30 740.20 C605.60 740.20 608.90 739.80 612.20 739.80 C614.83 739.80 617.47 742.00 620.10 742.00 C621.77 742.00 623.43 738.40 625.10 738.40 C639.00 738.40 652.90 738.63 666.80 739.10 C671.57 739.26 676.33 744.80 681.10 744.80 C683.97 744.80 686.83 736.20 689.70 736.20 C691.63 736.20 693.57 739.61 695.50 739.80 C700.27 740.27 705.03 740.50 709.80 740.50 C716.50 740.50 723.20 739.10 729.90 739.10 C731.10 739.10 732.30 743.40 733.50 743.40 C735.17 743.40 736.83 740.50 738.50 740.50 C741.93 740.50 745.37 742.96 748.80 744.20 C752.93 745.69 757.07 748.70 761.20 748.70 C762.97 748.70 764.73 740.00 766.50 740.00 C785.33 740.00 804.17 741.60 823.00 741.60 C824.20 741.60 825.40 734.50 826.60 734.50 C828.37 734.50 830.13 740.43 831.90 749.50 C833.37 757.03 834.83 780.50 836.30 780.50 C837.77 780.50 839.23 771.60 840.70 771.60 C842.17 771.60 843.63 791.10 845.10 791.10 C926.70 791.10 1008.30 791.10 1089.90 791.10 L1089.90 791.50 C933.27 791.75 776.63 792.00 620.00 792.00 C613.67 792.00 607.33 791.73 601.00 791.20 C599.43 791.07 597.87 770.60 596.30 770.60 C594.63 770.60 592.97 789.85 591.30 789.90 C552.53 791.17 513.77 791.80 475.00 791.80 C469.90 791.80 464.80 790.92 459.70 790.80 C448.47 790.53 437.23 790.40 426.00 790.40 C410.77 790.40 395.53 791.80 380.30 791.80 C378.97 791.80 377.63 788.40 376.30 788.40 C375.63 788.40 374.97 790.80 374.30 790.80 C353.10 790.80 331.90 790.20 310.70 790.20 C302.77 790.20 294.83 791.80 286.90 791.80 C285.43 791.80 283.97 784.40 282.50 784.40 C279.93 784.40 277.37 788.65 274.80 789.40 C271.13 790.47 267.47 791.00 263.80 791.00 C262.33 791.00 260.87 789.40 259.40 789.40 C254.97 789.40 250.53 791.60 246.10 791.60 C243.90 791.60 241.70 788.70 239.50 788.70 C235.10 788.70 230.70 791.60 226.30 791.60 C223.33 791.60 220.37 790.47 217.40 790.30 C211.53 789.97 205.67 789.80 199.80 789.80 C194.63 789.80 189.47 790.30 184.30 790.30 C182.47 790.30 180.63 778.40 178.80 778.40 C177.33 778.40 175.87 782.80 174.40 782.80 C173.67 782.80 172.93 765.63 172.20 763.40 C170.73 758.93 169.27 756.70 167.80 756.70 C165.23 756.70 162.67 789.40 160.10 789.40 C157.13 789.40 154.17 750.45 151.20 745.70 C149.37 742.77 147.53 741.30 145.70 741.30 C142.77 741.30 139.83 742.77 136.90 745.70 C135.07 747.53 133.23 752.68 131.40 753.40 C129.53 754.13 127.67 753.77 125.80 754.50 C124.33 755.08 122.87 790.90 121.40 791.00 C115.53 791.40 109.67 791.60 103.80 791.60 C102.30 791.60 100.80 785.40 99.30 785.40 C97.63 785.40 95.97 788.50 94.30 791.60 Z" fill="url(#c_orange)" stroke="none"/><path d="M178.20 618.20 C178.77 617.40 179.33 616.60 179.90 616.60 C181.27 616.60 182.63 734.93 184.00 735.80 C185.67 736.87 187.33 737.40 189.00 737.40 C190.67 737.40 192.33 713.11 194.00 711.00 C195.37 709.27 196.73 708.40 198.10 708.40 C199.20 708.40 200.30 735.38 201.40 735.80 C204.17 736.87 206.93 737.40 209.70 737.40 C213.13 737.40 216.57 735.00 220.00 735.00 C222.10 735.00 224.20 739.10 226.30 739.10 C230.70 739.10 235.10 730.20 239.50 730.20 C241.70 730.20 243.90 739.10 246.10 739.10 C249.07 739.10 252.03 739.10 255.00 739.10 L255.00 739.10 C252.03 739.10 249.07 739.10 246.10 739.10 C243.90 739.10 241.70 730.70 239.50 730.70 C235.10 730.70 230.70 739.10 226.30 739.10 C224.83 739.10 223.37 735.80 221.90 735.80 C215.07 735.80 208.23 736.60 201.40 736.60 C200.30 736.60 199.20 730.80 198.10 730.80 C196.43 730.80 194.77 738.20 193.10 738.20 C190.33 738.20 187.57 737.93 184.80 737.40 C183.17 737.09 181.53 616.60 179.90 616.60 C179.33 616.60 178.77 617.40 178.20 618.20 Z" fill="url(#c_purple)" stroke="none"/><path d="M600.70 739.10 C602.63 726.15 604.57 713.20 606.50 713.20 C608.40 713.20 610.30 724.71 612.20 729.00 C614.83 734.94 617.47 741.20 620.10 741.20 C621.77 741.20 623.43 714.70 625.10 714.70 C626.53 714.70 627.97 739.10 629.40 739.10 C635.87 739.10 642.33 739.10 648.80 739.10 C651.67 739.10 654.53 711.10 657.40 711.10 C659.10 711.10 660.80 728.30 662.50 728.30 C667.27 728.30 672.03 698.90 676.80 698.90 C678.23 698.90 679.67 716.10 681.10 716.10 C682.53 716.10 683.97 714.70 685.40 714.70 C686.83 714.70 688.27 715.90 689.70 718.30 C691.87 721.93 694.03 738.40 696.20 738.40 C699.30 738.40 702.40 722.63 705.50 716.10 C708.37 710.06 711.23 700.30 714.10 700.30 C717.23 700.30 720.37 704.60 723.50 704.60 C725.40 704.60 727.30 703.90 729.20 703.90 C732.30 703.90 735.40 732.10 738.50 736.20 C740.67 739.07 742.83 740.27 745.00 740.50 C746.27 740.63 747.53 740.61 748.80 740.70 C751.47 740.89 754.13 741.00 756.80 741.60 C758.27 741.93 759.73 750.40 761.20 750.40 C762.97 750.40 764.73 724.80 766.50 724.80 C767.97 724.80 769.43 740.70 770.90 740.70 C777.10 740.70 783.30 738.90 789.50 738.90 C791.27 738.90 793.03 743.40 794.80 743.40 C797.73 743.40 800.67 739.80 803.60 739.80 C806.83 739.80 810.07 742.50 813.30 742.50 C816.53 742.50 819.77 742.20 823.00 741.60 C824.20 741.38 825.40 723.00 826.60 723.00 C828.07 723.00 829.53 736.70 831.00 742.50 C834.23 755.29 837.47 757.45 840.70 770.70 C842.17 776.71 843.63 791.10 845.10 791.10 C884.40 791.10 923.70 791.10 963.00 791.10 C964.40 791.10 965.80 786.30 967.20 786.30 C968.97 786.30 970.73 791.10 972.50 791.10 C974.00 791.10 975.50 791.10 977.00 791.10 C978.33 791.10 979.67 787.50 981.00 787.50 C982.33 787.50 983.67 791.10 985.00 791.10 C1015.53 791.10 1046.07 791.10 1076.60 791.10 C1078.37 791.10 1080.13 789.81 1081.90 789.30 C1084.53 788.54 1087.17 788.07 1089.80 787.60 L1089.80 791.10 C1008.23 791.10 926.67 791.10 845.10 791.10 C843.63 791.10 842.17 771.60 840.70 771.60 C839.23 771.60 837.77 780.50 836.30 780.50 C834.83 780.50 833.37 757.03 831.90 749.50 C830.13 740.43 828.37 734.50 826.60 734.50 C825.40 734.50 824.20 741.60 823.00 741.60 C804.17 741.60 785.33 740.00 766.50 740.00 C764.73 740.00 762.97 748.70 761.20 748.70 C757.07 748.70 752.93 745.69 748.80 744.20 C745.37 742.96 741.93 740.50 738.50 740.50 C736.83 740.50 735.17 743.40 733.50 743.40 C732.30 743.40 731.10 739.10 729.90 739.10 C723.20 739.10 716.50 740.50 709.80 740.50 C705.03 740.50 700.27 740.27 695.50 739.80 C693.57 739.61 691.63 736.20 689.70 736.20 C686.83 736.20 683.97 744.80 681.10 744.80 C676.33 744.80 671.57 739.26 666.80 739.10 C652.90 738.63 639.00 738.40 625.10 738.40 C623.43 738.40 621.77 742.00 620.10 742.00 C617.47 742.00 614.83 739.80 612.20 739.80 C608.90 739.80 605.60 740.20 602.30 740.20 C601.77 740.20 601.23 714.34 600.70 688.48 Z" fill="url(#c_purple)" stroke="none"/><path d="M278.00 736.20 C279.17 686.35 280.33 636.50 281.50 636.50 C282.00 636.50 282.50 636.73 283.00 637.20 C284.30 638.41 285.60 738.40 286.90 738.40 C288.47 738.40 290.03 683.80 291.60 683.80 C293.27 683.80 294.93 714.85 296.60 719.00 C299.33 725.80 302.07 729.20 304.80 729.20 C306.67 729.20 308.53 706.40 310.40 706.40 C312.17 706.40 313.93 730.20 315.70 730.20 C317.37 730.20 319.03 724.30 320.70 724.30 C322.67 724.30 324.63 727.20 326.60 727.20 C328.60 727.20 330.60 727.20 332.60 727.20 C336.23 727.20 339.87 734.20 343.50 734.20 C345.17 734.20 346.83 722.30 348.50 722.30 C351.47 722.30 354.43 732.80 357.40 732.80 C358.93 732.80 360.47 719.70 362.00 719.70 C363.47 719.70 364.93 733.20 366.40 733.20 C368.37 733.20 370.33 731.53 372.30 728.20 C374.97 723.68 377.63 687.79 380.30 683.60 C383.27 678.93 386.23 680.46 389.20 676.60 C391.20 674.00 393.20 666.70 395.20 666.70 C398.50 666.70 401.80 669.00 405.10 673.60 C406.73 675.88 408.37 712.03 410.00 715.30 C412.67 720.63 415.33 723.30 418.00 723.30 C419.67 723.30 421.33 709.00 423.00 709.00 C424.63 709.00 426.27 714.90 427.90 714.90 C429.57 714.90 431.23 707.40 432.90 707.40 C435.73 707.40 438.57 727.41 441.40 729.20 C445.20 731.60 449.00 732.80 452.80 732.80 C454.43 732.80 456.07 729.63 457.70 723.30 C460.03 714.25 462.37 663.58 464.70 662.70 C466.47 662.03 468.23 662.04 470.00 661.70 C472.30 661.25 474.60 660.77 476.90 660.30 C479.20 659.83 481.50 658.90 483.80 658.90 C485.17 658.90 486.53 705.51 487.90 715.40 C489.30 725.53 490.70 730.60 492.10 730.60 C493.93 730.60 495.77 704.40 497.60 704.40 C499.43 704.40 501.27 704.87 503.10 705.80 C505.40 706.97 507.70 733.30 510.00 733.30 C512.77 733.30 515.53 733.30 518.30 733.30 C521.03 733.30 523.77 669.90 526.50 669.90 C528.80 669.90 531.10 670.83 533.40 672.70 C536.17 674.95 538.93 729.20 541.70 729.20 C544.47 729.20 547.23 683.70 550.00 683.70 C551.83 683.70 553.67 729.20 555.50 729.20 C558.23 729.20 560.97 727.80 563.70 727.80 C565.57 727.80 567.43 732.35 569.30 733.30 C572.97 735.17 576.63 736.10 580.30 736.10 C583.07 736.10 585.83 734.70 588.60 734.70 C589.97 734.70 591.33 736.10 592.70 737.50 L592.70 692.56 C592.23 714.75 591.77 736.95 591.30 737.00 C578.90 738.27 566.50 738.90 554.10 738.90 C552.73 738.90 551.37 732.00 550.00 732.00 C549.07 732.00 548.13 738.90 547.20 738.90 C527.43 738.90 507.67 738.90 487.90 738.90 C486.53 738.90 485.17 732.80 483.80 732.80 C481.97 732.80 480.13 738.90 478.30 738.90 C476.90 738.90 475.50 731.90 474.10 731.90 C472.73 731.90 471.37 732.51 470.00 733.30 C467.90 734.51 465.80 739.20 463.70 739.20 C455.73 739.20 447.77 739.20 439.80 739.20 C438.50 739.20 437.20 735.20 435.90 735.20 C431.93 735.20 427.97 738.49 424.00 738.60 C409.43 739.00 394.87 739.20 380.30 739.20 C378.97 739.20 377.63 735.20 376.30 735.20 C375.63 735.20 374.97 738.80 374.30 738.80 C364.37 738.80 354.43 738.20 344.50 738.20 C334.57 738.20 324.63 739.20 314.70 739.20 C313.37 739.20 312.03 737.20 310.70 737.20 C303.60 737.20 296.50 739.10 289.40 739.10 C288.20 739.10 287.00 738.60 285.80 737.60 C284.87 736.82 283.93 639.64 283.00 637.90 C282.50 636.97 282.00 636.50 281.50 636.50 C280.33 636.50 279.17 686.35 278.00 736.20 Z" fill="url(#c_pink)" stroke="none"/><path d="M596.60 563.80 C597.97 651.80 599.33 739.80 600.70 739.80 C602.40 739.80 604.10 677.40 605.80 677.40 C608.43 677.40 611.07 681.53 613.70 687.40 C614.63 689.48 615.57 689.80 616.50 694.60 C617.70 700.77 618.90 726.20 620.10 726.20 C621.53 726.20 622.97 703.83 624.40 702.50 C628.00 699.17 631.60 697.50 635.20 697.50 C638.07 697.50 640.93 698.93 643.80 701.80 C646.67 704.67 649.53 723.30 652.40 723.30 C654.07 723.30 655.73 688.80 657.40 688.80 C658.60 688.80 659.80 708.05 661.00 710.40 C662.70 713.73 664.40 715.40 666.10 715.40 C667.77 715.40 669.43 694.37 671.10 693.90 C672.77 693.43 674.43 693.67 676.10 693.20 C677.77 692.73 679.43 683.10 681.10 683.10 C685.90 683.10 690.70 737.70 695.50 737.70 C698.37 737.70 701.23 687.40 704.10 687.40 C707.43 687.40 710.77 687.63 714.10 688.10 C717.23 688.54 720.37 696.00 723.50 696.00 C725.17 696.00 726.83 691.70 728.50 691.70 C729.93 691.70 731.37 693.13 732.80 696.00 C735.53 701.47 738.27 734.12 741.00 736.00 C743.03 737.40 745.07 738.10 747.10 738.10 C748.57 738.10 750.03 696.50 751.50 696.50 C752.97 696.50 754.43 735.13 755.90 739.00 C757.67 743.67 759.43 746.00 761.20 746.00 C762.97 746.00 764.73 721.30 766.50 721.30 C767.97 721.30 769.43 728.30 770.90 728.30 C772.37 728.30 773.83 710.70 775.30 710.70 C777.07 710.70 778.83 729.20 780.60 729.20 C783.57 729.20 786.53 727.50 789.50 727.50 C791.27 727.50 793.03 739.29 794.80 739.80 C796.87 740.40 798.93 740.70 801.00 740.70 C803.33 740.70 805.67 733.60 808.00 733.60 C809.77 733.60 811.53 741.60 813.30 741.60 C816.53 741.60 819.77 741.60 823.00 741.60 C824.20 741.60 825.40 716.90 826.60 716.90 C827.77 716.90 828.93 738.90 830.10 738.90 C831.87 738.90 833.63 718.65 835.40 710.70 C837.17 702.75 838.93 691.20 840.70 691.20 C842.47 691.20 844.23 750.93 846.00 763.70 C847.47 774.30 848.93 779.60 850.40 779.60 C851.87 779.60 853.33 739.80 854.80 739.80 C856.57 739.80 858.33 786.60 860.10 786.60 C861.60 786.60 863.10 785.73 864.60 784.00 C867.53 780.61 870.47 720.40 873.40 720.40 C875.47 720.40 877.53 729.44 879.60 735.40 C882.30 743.19 885.00 763.70 887.70 763.70 C890.63 763.70 893.57 736.30 896.50 736.30 C898.27 736.30 900.03 757.69 901.80 765.40 C903.27 771.80 904.73 780.50 906.20 780.50 C907.97 780.50 909.73 779.60 911.50 777.80 C912.97 776.31 914.43 726.60 915.90 726.60 C917.37 726.60 918.83 728.37 920.30 731.90 C922.07 736.16 923.83 754.80 925.60 754.80 C928.57 754.80 931.53 723.90 934.50 723.90 C936.27 723.90 938.03 734.03 939.80 737.20 C941.27 739.83 942.73 738.97 944.20 742.50 C945.67 746.03 947.13 780.50 948.60 780.50 C950.27 780.50 951.93 728.30 953.60 728.30 C955.17 728.30 956.73 789.30 958.30 789.30 C959.77 789.30 961.23 788.89 962.70 788.40 C964.20 787.90 965.70 786.30 967.20 786.30 C968.97 786.30 970.73 788.70 972.50 791.10 L972.50 791.10 C970.73 788.70 968.97 786.30 967.20 786.30 C965.80 786.30 964.40 791.10 963.00 791.10 C923.70 791.10 884.40 791.10 845.10 791.10 C843.63 791.10 842.17 776.71 840.70 770.70 C837.47 757.45 834.23 755.29 831.00 742.50 C829.53 736.70 828.07 723.00 826.60 723.00 C825.40 723.00 824.20 741.38 823.00 741.60 C819.77 742.20 816.53 742.50 813.30 742.50 C810.07 742.50 806.83 739.80 803.60 739.80 C800.67 739.80 797.73 743.40 794.80 743.40 C793.03 743.40 791.27 738.90 789.50 738.90 C783.30 738.90 777.10 740.70 770.90 740.70 C769.43 740.70 767.97 724.80 766.50 724.80 C764.73 724.80 762.97 750.40 761.20 750.40 C759.73 750.40 758.27 741.93 756.80 741.60 C754.13 741.00 751.47 740.89 748.80 740.70 C747.53 740.61 746.27 740.63 745.00 740.50 C742.83 740.27 740.67 739.07 738.50 736.20 C735.40 732.10 732.30 703.90 729.20 703.90 C727.30 703.90 725.40 704.60 723.50 704.60 C720.37 704.60 717.23 700.30 714.10 700.30 C711.23 700.30 708.37 710.06 705.50 716.10 C702.40 722.63 699.30 738.40 696.20 738.40 C694.03 738.40 691.87 721.93 689.70 718.30 C688.27 715.90 686.83 714.70 685.40 714.70 C683.97 714.70 682.53 716.10 681.10 716.10 C679.67 716.10 678.23 698.90 676.80 698.90 C672.03 698.90 667.27 728.30 662.50 728.30 C660.80 728.30 659.10 711.10 657.40 711.10 C654.53 711.10 651.67 739.10 648.80 739.10 C642.33 739.10 635.87 739.10 629.40 739.10 C627.97 739.10 626.53 714.70 625.10 714.70 C623.43 714.70 621.77 741.20 620.10 741.20 C617.47 741.20 614.83 734.94 612.20 729.00 C610.30 724.71 608.40 713.20 606.50 713.20 C604.57 713.20 602.63 739.10 600.70 739.10 C599.40 739.10 598.10 562.40 596.80 562.40 C596.73 562.40 596.67 565.57 596.60 568.75 Z" fill="url(#c_red)" stroke="none"/><path d="M600.70 739.80 C602.40 691.55 604.10 643.31 605.80 642.20 C607.23 641.27 608.67 640.80 610.10 640.80 C612.00 640.80 613.90 642.47 615.80 645.80 C617.23 648.31 618.67 710.40 620.10 710.40 C622.73 710.40 625.37 667.80 628.00 663.00 C630.63 658.20 633.27 655.80 635.90 655.80 C638.53 655.80 641.17 657.23 643.80 660.10 C646.67 663.22 649.53 723.30 652.40 723.30 C654.23 723.30 656.07 672.30 657.90 672.30 C660.63 672.30 663.37 713.20 666.10 713.20 C668.00 713.20 669.90 680.20 671.80 680.20 C673.00 680.20 674.20 686.00 675.40 686.00 C677.30 686.00 679.20 652.20 681.10 652.20 C685.90 652.20 690.70 737.70 695.50 737.70 C698.60 737.70 701.70 660.90 704.80 660.90 C707.90 660.90 711.00 670.27 714.10 673.80 C716.03 676.00 717.97 675.92 719.90 679.50 C721.10 681.72 722.30 688.10 723.50 688.10 C726.60 688.10 729.70 667.30 732.80 667.30 C735.43 667.30 738.07 738.40 740.70 738.40 C742.83 738.40 744.97 737.70 747.10 736.30 C748.73 735.23 750.37 648.80 752.00 648.80 C753.60 648.80 755.20 733.66 756.80 738.10 C758.27 742.17 759.73 744.20 761.20 744.20 C762.97 744.20 764.73 714.96 766.50 710.70 C767.97 707.17 769.43 707.90 770.90 705.40 C772.37 702.90 773.83 695.70 775.30 695.70 C777.07 695.70 778.83 718.60 780.60 718.60 C783.57 718.60 786.53 715.10 789.50 715.10 C791.27 715.10 793.03 737.13 794.80 738.10 C796.87 739.23 798.93 739.80 801.00 739.80 C803.33 739.80 805.67 728.30 808.00 728.30 C809.77 728.30 811.53 741.60 813.30 741.60 C816.53 741.60 819.77 741.30 823.00 740.70 C824.20 740.48 825.40 693.90 826.60 693.90 C828.37 693.90 830.13 740.70 831.90 740.70 C833.37 740.70 834.83 659.93 836.30 659.40 C837.77 658.87 839.23 658.60 840.70 658.60 C841.87 658.60 843.03 734.33 844.20 746.00 C845.97 763.67 847.73 772.50 849.50 772.50 C851.27 772.50 853.03 700.10 854.80 700.10 C856.57 700.10 858.33 779.89 860.10 781.30 C861.60 782.50 863.10 783.10 864.60 783.10 C867.53 783.10 870.47 662.10 873.40 662.10 C875.47 662.10 877.53 731.90 879.60 731.90 C880.77 731.90 881.93 684.20 883.10 684.20 C884.63 684.20 886.17 696.50 887.70 696.50 C889.17 696.50 890.63 693.00 892.10 693.00 C895.33 693.00 898.57 763.70 901.80 763.70 C903.57 763.70 905.33 719.50 907.10 719.50 C908.57 719.50 910.03 777.80 911.50 777.80 C912.97 777.80 914.43 667.54 915.90 665.60 C917.67 663.27 919.43 662.10 921.20 662.10 C922.67 662.10 924.13 746.90 925.60 746.90 C927.27 746.90 928.93 671.80 930.60 671.80 C932.20 671.80 933.80 722.20 935.40 722.20 C936.87 722.20 938.33 671.80 939.80 671.80 C941.27 671.80 942.73 740.70 944.20 740.70 C945.67 740.70 947.13 716.90 948.60 716.90 C950.07 716.90 951.53 726.60 953.00 726.60 C954.77 726.60 956.53 724.80 958.30 724.80 C960.07 724.80 961.83 788.40 963.60 788.40 C964.97 788.40 966.33 701.80 967.70 701.80 C969.30 701.80 970.90 791.10 972.50 791.10 C975.60 791.10 978.70 718.60 981.80 718.60 C983.40 718.60 985.00 791.10 986.60 791.10 C988.23 791.10 989.87 720.40 991.50 720.40 C993.07 720.40 994.63 740.70 996.20 740.70 C997.67 740.70 999.13 697.40 1000.60 697.40 C1002.23 697.40 1003.87 791.10 1005.50 791.10 C1007.10 791.10 1008.70 714.20 1010.30 714.20 C1012.07 714.20 1013.83 791.10 1015.60 791.10 C1016.80 791.10 1018.00 791.10 1019.20 791.10 C1020.97 791.10 1022.73 721.30 1024.50 721.30 C1025.97 721.30 1027.43 791.10 1028.90 791.10 C1030.37 791.10 1031.83 712.40 1033.30 712.40 C1035.07 712.40 1036.83 791.10 1038.60 791.10 C1040.07 791.10 1041.53 791.10 1043.00 791.10 C1044.47 791.10 1045.93 717.70 1047.40 717.70 C1049.17 717.70 1050.93 791.10 1052.70 791.10 C1054.17 791.10 1055.63 722.20 1057.10 722.20 C1058.60 722.20 1060.10 731.90 1061.60 731.90 C1063.17 731.90 1064.73 703.60 1066.30 703.60 C1067.97 703.60 1069.63 791.10 1071.30 791.10 C1072.77 791.10 1074.23 721.30 1075.70 721.30 C1077.47 721.30 1079.23 789.30 1081.00 789.30 C1082.47 789.30 1083.93 780.50 1085.40 780.50 C1086.87 780.50 1088.33 784.05 1089.80 787.60 L1089.80 791.10 C1050.70 791.10 1011.60 791.10 972.50 791.10 C970.73 791.10 968.97 786.30 967.20 786.30 C965.70 786.30 964.20 787.90 962.70 788.40 C961.23 788.89 959.77 789.30 958.30 789.30 C956.73 789.30 955.17 728.30 953.60 728.30 C951.93 728.30 950.27 780.50 948.60 780.50 C947.13 780.50 945.67 746.03 944.20 742.50 C942.73 738.97 941.27 739.83 939.80 737.20 C938.03 734.03 936.27 723.90 934.50 723.90 C931.53 723.90 928.57 754.80 925.60 754.80 C923.83 754.80 922.07 736.16 920.30 731.90 C918.83 728.37 917.37 726.60 915.90 726.60 C914.43 726.60 912.97 776.31 911.50 777.80 C909.73 779.60 907.97 780.50 906.20 780.50 C904.73 780.50 903.27 771.80 901.80 765.40 C900.03 757.69 898.27 736.30 896.50 736.30 C893.57 736.30 890.63 763.70 887.70 763.70 C885.00 763.70 882.30 743.19 879.60 735.40 C877.53 729.44 875.47 720.40 873.40 720.40 C870.47 720.40 867.53 780.61 864.60 784.00 C863.10 785.73 861.60 786.60 860.10 786.60 C858.33 786.60 856.57 739.80 854.80 739.80 C853.33 739.80 851.87 779.60 850.40 779.60 C848.93 779.60 847.47 774.30 846.00 763.70 C844.23 750.93 842.47 691.20 840.70 691.20 C838.93 691.20 837.17 702.75 835.40 710.70 C833.63 718.65 831.87 738.90 830.10 738.90 C828.93 738.90 827.77 716.90 826.60 716.90 C825.40 716.90 824.20 741.60 823.00 741.60 C819.77 741.60 816.53 741.60 813.30 741.60 C811.53 741.60 809.77 733.60 808.00 733.60 C805.67 733.60 803.33 740.70 801.00 740.70 C798.93 740.70 796.87 740.40 794.80 739.80 C793.03 739.29 791.27 727.50 789.50 727.50 C786.53 727.50 783.57 729.20 780.60 729.20 C778.83 729.20 777.07 710.70 775.30 710.70 C773.83 710.70 772.37 728.30 770.90 728.30 C769.43 728.30 767.97 721.30 766.50 721.30 C764.73 721.30 762.97 746.00 761.20 746.00 C759.43 746.00 757.67 743.67 755.90 739.00 C754.43 735.13 752.97 696.50 751.50 696.50 C750.03 696.50 748.57 738.10 747.10 738.10 C745.07 738.10 743.03 737.40 741.00 736.00 C738.27 734.12 735.53 701.47 732.80 696.00 C731.37 693.13 729.93 691.70 728.50 691.70 C726.83 691.70 725.17 696.00 723.50 696.00 C720.37 696.00 717.23 688.54 714.10 688.10 C710.77 687.63 707.43 687.40 704.10 687.40 C701.23 687.40 698.37 737.70 695.50 737.70 C690.70 737.70 685.90 683.10 681.10 683.10 C679.43 683.10 677.77 692.73 676.10 693.20 C674.43 693.67 672.77 693.43 671.10 693.90 C669.43 694.37 667.77 715.40 666.10 715.40 C664.40 715.40 662.70 713.73 661.00 710.40 C659.80 708.05 658.60 688.80 657.40 688.80 C655.73 688.80 654.07 723.30 652.40 723.30 C649.53 723.30 646.67 704.67 643.80 701.80 C640.93 698.93 638.07 697.50 635.20 697.50 C631.60 697.50 628.00 699.17 624.40 702.50 C622.97 703.83 621.53 726.20 620.10 726.20 C618.90 726.20 617.70 700.77 616.50 694.60 C615.57 689.80 614.63 689.48 613.70 687.40 C611.07 681.53 608.43 677.40 605.80 677.40 C604.10 677.40 602.40 708.60 600.70 739.80 Z" fill="url(#c_teal)" stroke="none"/><path d="M94.30 791.60 C95.97 788.50 97.63 785.40 99.30 785.40 C100.80 785.40 102.30 791.60 103.80 791.60 C109.67 791.60 115.53 791.40 121.40 791.00 C122.87 790.90 124.33 755.08 125.80 754.50 C127.67 753.77 129.53 754.13 131.40 753.40 C133.23 752.68 135.07 747.53 136.90 745.70 C139.83 742.77 142.77 741.30 145.70 741.30 C147.53 741.30 149.37 742.77 151.20 745.70 C154.17 750.45 157.13 789.40 160.10 789.40 C162.67 789.40 165.23 756.70 167.80 756.70 C169.27 756.70 170.73 758.93 172.20 763.40 C172.93 765.63 173.67 782.80 174.40 782.80 C175.87 782.80 177.33 778.40 178.80 778.40 C180.63 778.40 182.47 790.30 184.30 790.30 C189.47 790.30 194.63 789.80 199.80 789.80 C205.67 789.80 211.53 789.97 217.40 790.30 C220.37 790.47 223.33 791.60 226.30 791.60 C230.70 791.60 235.10 788.70 239.50 788.70 C241.70 788.70 243.90 791.60 246.10 791.60 C250.53 791.60 254.97 789.40 259.40 789.40 C260.87 789.40 262.33 791.00 263.80 791.00 C267.47 791.00 271.13 790.47 274.80 789.40 C277.37 788.65 279.93 784.40 282.50 784.40 C283.97 784.40 285.43 791.80 286.90 791.80 C294.83 791.80 302.77 790.20 310.70 790.20 C331.90 790.20 353.10 790.80 374.30 790.80 C374.97 790.80 375.63 788.40 376.30 788.40 C377.63 788.40 378.97 791.80 380.30 791.80 C395.53 791.80 410.77 790.40 426.00 790.40 C437.23 790.40 448.47 790.53 459.70 790.80 C464.80 790.92 469.90 791.80 475.00 791.80 C513.77 791.80 552.53 791.17 591.30 789.90 C592.97 789.85 594.63 770.60 596.30 770.60 C597.87 770.60 599.43 791.07 601.00 791.20 C607.33 791.73 613.67 792.00 620.00 792.00 C776.63 792.00 933.27 791.75 1089.90 791.50" fill="none" stroke="#2563eb" stroke-width="1.7" stroke-linejoin="round" stroke-linecap="round"/><path d="M94.30 746.10 C95.97 736.85 97.63 727.60 99.30 727.60 C100.80 727.60 102.30 739.10 103.80 739.10 C109.67 739.10 115.53 738.73 121.40 738.00 C123.23 737.77 125.07 706.88 126.90 701.50 C128.40 697.10 129.90 696.28 131.40 694.90 C136.17 690.50 140.93 688.30 145.70 688.30 C147.53 688.30 149.37 689.03 151.20 690.50 C154.17 692.87 157.13 735.80 160.10 735.80 C162.57 735.80 165.03 704.30 167.50 704.30 C168.30 704.30 169.10 704.57 169.90 705.10 C171.30 706.03 172.70 727.83 174.10 730.80 C175.73 734.27 177.37 735.21 179.00 736.00 C180.93 736.93 182.87 737.05 184.80 737.40 C187.57 737.90 190.33 738.20 193.10 738.20 C194.77 738.20 196.43 731.50 198.10 731.50 C199.20 731.50 200.30 736.60 201.40 736.60 C208.23 736.60 215.07 735.80 221.90 735.80 C223.37 735.80 224.83 739.10 226.30 739.10 C230.70 739.10 235.10 730.70 239.50 730.70 C241.70 730.70 243.90 739.10 246.10 739.10 C249.07 739.10 252.03 739.10 255.00 739.10 C256.20 739.10 257.40 736.20 258.60 736.20 C260.03 736.20 261.47 738.40 262.90 738.40 C264.57 738.40 266.23 729.80 267.90 729.80 C269.10 729.80 270.30 736.90 271.50 736.90 C273.67 736.90 275.83 736.20 278.00 736.20 C279.33 736.20 280.67 736.76 282.00 737.00 C283.27 737.23 284.53 737.23 285.80 737.60 C287.00 737.95 288.20 739.10 289.40 739.10 C296.50 739.10 303.60 737.20 310.70 737.20 C312.03 737.20 313.37 739.20 314.70 739.20 C324.63 739.20 334.57 738.20 344.50 738.20 C354.43 738.20 364.37 738.80 374.30 738.80 C374.97 738.80 375.63 735.20 376.30 735.20 C377.63 735.20 378.97 739.20 380.30 739.20 C394.87 739.20 409.43 739.00 424.00 738.60 C425.97 738.55 427.93 738.20 429.90 738.20 C432.57 738.20 435.23 739.60 437.90 739.60 C446.50 739.60 455.10 739.47 463.70 739.20 C466.33 739.12 468.97 738.20 471.60 738.20 C473.83 738.20 476.07 739.60 478.30 739.60 C481.50 739.60 484.70 739.60 487.90 739.60 C507.67 739.60 527.43 739.20 547.20 739.20 C549.50 739.20 551.80 739.60 554.10 739.60 C566.50 739.60 578.90 737.00 591.30 737.00 C593.13 737.00 594.97 737.97 596.80 738.50 C598.63 739.03 600.47 740.20 602.30 740.20 C605.60 740.20 608.90 739.80 612.20 739.80 C614.83 739.80 617.47 742.00 620.10 742.00 C621.77 742.00 623.43 738.40 625.10 738.40 C639.00 738.40 652.90 738.63 666.80 739.10 C671.57 739.26 676.33 744.80 681.10 744.80 C683.97 744.80 686.83 736.20 689.70 736.20 C691.63 736.20 693.57 739.61 695.50 739.80 C700.27 740.27 705.03 740.50 709.80 740.50 C716.50 740.50 723.20 739.10 729.90 739.10 C731.10 739.10 732.30 743.40 733.50 743.40 C735.17 743.40 736.83 740.50 738.50 740.50 C741.93 740.50 745.37 742.96 748.80 744.20 C752.93 745.69 757.07 748.70 761.20 748.70 C762.97 748.70 764.73 740.00 766.50 740.00 C785.33 740.00 804.17 741.60 823.00 741.60 C824.20 741.60 825.40 734.50 826.60 734.50 C828.37 734.50 830.13 740.43 831.90 749.50 C833.37 757.03 834.83 780.50 836.30 780.50 C837.77 780.50 839.23 771.60 840.70 771.60 C842.17 771.60 843.63 791.10 845.10 791.10 C926.70 791.10 1008.30 791.10 1089.90 791.10" fill="none" stroke="#ea580c" stroke-width="1.7" stroke-linejoin="round" stroke-linecap="round"/><path d="M94.30 746.10 C95.97 736.85 97.63 727.60 99.30 727.60 C100.80 727.60 102.30 739.10 103.80 739.10 C109.67 739.10 115.53 738.73 121.40 738.00 C123.23 737.77 125.07 706.88 126.90 701.50 C128.40 697.10 129.90 696.28 131.40 694.90 C136.17 690.50 140.93 688.30 145.70 688.30 C147.53 688.30 149.37 689.03 151.20 690.50 C154.17 692.87 157.13 735.80 160.10 735.80 C162.57 735.80 165.03 704.30 167.50 704.30 C168.30 704.30 169.10 704.57 169.90 705.10 C171.30 706.03 172.70 730.80 174.10 730.80 C175.47 730.80 176.83 620.77 178.20 618.20 C178.77 617.13 179.33 616.60 179.90 616.60 C181.53 616.60 183.17 737.09 184.80 737.40 C187.57 737.93 190.33 738.20 193.10 738.20 C194.77 738.20 196.43 730.80 198.10 730.80 C199.20 730.80 200.30 736.60 201.40 736.60 C208.23 736.60 215.07 735.80 221.90 735.80 C223.37 735.80 224.83 739.10 226.30 739.10 C230.70 739.10 235.10 730.70 239.50 730.70 C241.70 730.70 243.90 739.10 246.10 739.10 C249.07 739.10 252.03 739.10 255.00 739.10 C256.20 739.10 257.40 736.20 258.60 736.20 C260.03 736.20 261.47 738.40 262.90 738.40 C264.57 738.40 266.23 729.80 267.90 729.80 C269.10 729.80 270.30 736.90 271.50 736.90 C273.67 736.90 275.83 736.67 278.00 736.20 C279.17 735.95 280.33 636.50 281.50 636.50 C282.00 636.50 282.50 636.97 283.00 637.90 C283.93 639.64 284.87 736.82 285.80 737.60 C287.00 738.60 288.20 739.10 289.40 739.10 C296.50 739.10 303.60 737.20 310.70 737.20 C312.03 737.20 313.37 739.20 314.70 739.20 C324.63 739.20 334.57 738.20 344.50 738.20 C354.43 738.20 364.37 738.80 374.30 738.80 C374.97 738.80 375.63 735.20 376.30 735.20 C377.63 735.20 378.97 739.20 380.30 739.20 C394.87 739.20 409.43 739.00 424.00 738.60 C427.97 738.49 431.93 735.20 435.90 735.20 C437.20 735.20 438.50 739.20 439.80 739.20 C447.77 739.20 455.73 739.20 463.70 739.20 C465.80 739.20 467.90 734.51 470.00 733.30 C471.37 732.51 472.73 731.90 474.10 731.90 C475.50 731.90 476.90 738.90 478.30 738.90 C480.13 738.90 481.97 732.80 483.80 732.80 C485.17 732.80 486.53 738.90 487.90 738.90 C507.67 738.90 527.43 738.90 547.20 738.90 C548.13 738.90 549.07 732.00 550.00 732.00 C551.37 732.00 552.73 738.90 554.10 738.90 C566.50 738.90 578.90 738.27 591.30 737.00 C593.13 736.81 594.97 562.40 596.80 562.40 C598.63 562.40 600.47 740.20 602.30 740.20 C605.60 740.20 608.90 739.80 612.20 739.80 C614.83 739.80 617.47 742.00 620.10 742.00 C621.77 742.00 623.43 738.40 625.10 738.40 C639.00 738.40 652.90 738.63 666.80 739.10 C671.57 739.26 676.33 744.80 681.10 744.80 C683.97 744.80 686.83 736.20 689.70 736.20 C691.63 736.20 693.57 739.61 695.50 739.80 C700.27 740.27 705.03 740.50 709.80 740.50 C716.50 740.50 723.20 739.10 729.90 739.10 C731.10 739.10 732.30 743.40 733.50 743.40 C735.17 743.40 736.83 740.50 738.50 740.50 C741.93 740.50 745.37 742.96 748.80 744.20 C752.93 745.69 757.07 748.70 761.20 748.70 C762.97 748.70 764.73 740.00 766.50 740.00 C785.33 740.00 804.17 740.80 823.00 741.60" fill="none" stroke="#1faa4a" stroke-width="1.7" stroke-linejoin="round" stroke-linecap="round"/><path d="M178.20 618.20 C178.77 617.40 179.33 616.60 179.90 616.60 C181.27 616.60 182.63 734.93 184.00 735.80 C185.67 736.87 187.33 737.40 189.00 737.40 C190.67 737.40 192.33 713.11 194.00 711.00 C195.37 709.27 196.73 708.40 198.10 708.40 C199.20 708.40 200.30 735.38 201.40 735.80 C204.17 736.87 206.93 737.40 209.70 737.40 C213.13 737.40 216.57 735.00 220.00 735.00 C222.10 735.00 224.20 739.10 226.30 739.10 C230.70 739.10 235.10 730.20 239.50 730.20 C241.70 730.20 243.90 739.10 246.10 739.10 C249.07 739.10 252.03 739.10 255.00 739.10" fill="none" stroke="#9333ea" stroke-width="1.7" stroke-linejoin="round" stroke-linecap="round"/><path d="M600.70 739.10 C602.63 726.15 604.57 713.20 606.50 713.20 C608.40 713.20 610.30 724.71 612.20 729.00 C614.83 734.94 617.47 741.20 620.10 741.20 C621.77 741.20 623.43 714.70 625.10 714.70 C626.53 714.70 627.97 739.10 629.40 739.10 C635.87 739.10 642.33 739.10 648.80 739.10 C651.67 739.10 654.53 711.10 657.40 711.10 C659.10 711.10 660.80 728.30 662.50 728.30 C667.27 728.30 672.03 698.90 676.80 698.90 C678.23 698.90 679.67 716.10 681.10 716.10 C682.53 716.10 683.97 714.70 685.40 714.70 C686.83 714.70 688.27 715.90 689.70 718.30 C691.87 721.93 694.03 738.40 696.20 738.40 C699.30 738.40 702.40 722.63 705.50 716.10 C708.37 710.06 711.23 700.30 714.10 700.30 C717.23 700.30 720.37 704.60 723.50 704.60 C725.40 704.60 727.30 703.90 729.20 703.90 C732.30 703.90 735.40 732.10 738.50 736.20 C740.67 739.07 742.83 740.27 745.00 740.50 C746.27 740.63 747.53 740.61 748.80 740.70 C751.47 740.89 754.13 741.00 756.80 741.60 C758.27 741.93 759.73 750.40 761.20 750.40 C762.97 750.40 764.73 724.80 766.50 724.80 C767.97 724.80 769.43 740.70 770.90 740.70 C777.10 740.70 783.30 738.90 789.50 738.90 C791.27 738.90 793.03 743.40 794.80 743.40 C797.73 743.40 800.67 739.80 803.60 739.80 C806.83 739.80 810.07 742.50 813.30 742.50 C816.53 742.50 819.77 742.20 823.00 741.60 C824.20 741.38 825.40 723.00 826.60 723.00 C828.07 723.00 829.53 736.70 831.00 742.50 C834.23 755.29 837.47 757.45 840.70 770.70 C842.17 776.71 843.63 791.10 845.10 791.10 C884.40 791.10 923.70 791.10 963.00 791.10 C964.40 791.10 965.80 786.30 967.20 786.30 C968.97 786.30 970.73 791.10 972.50 791.10 C974.00 791.10 975.50 791.10 977.00 791.10 C978.33 791.10 979.67 787.50 981.00 787.50 C982.33 787.50 983.67 791.10 985.00 791.10 C1015.53 791.10 1046.07 791.10 1076.60 791.10 C1078.37 791.10 1080.13 789.81 1081.90 789.30 C1084.53 788.54 1087.17 788.07 1089.80 787.60" fill="none" stroke="#9333ea" stroke-width="1.7" stroke-linejoin="round" stroke-linecap="round"/><path d="M278.00 736.20 C279.17 686.35 280.33 636.50 281.50 636.50 C282.00 636.50 282.50 636.73 283.00 637.20 C284.30 638.41 285.60 738.40 286.90 738.40 C288.47 738.40 290.03 683.80 291.60 683.80 C293.27 683.80 294.93 714.85 296.60 719.00 C299.33 725.80 302.07 729.20 304.80 729.20 C306.67 729.20 308.53 706.40 310.40 706.40 C312.17 706.40 313.93 730.20 315.70 730.20 C317.37 730.20 319.03 724.30 320.70 724.30 C322.67 724.30 324.63 727.20 326.60 727.20 C328.60 727.20 330.60 727.20 332.60 727.20 C336.23 727.20 339.87 734.20 343.50 734.20 C345.17 734.20 346.83 722.30 348.50 722.30 C351.47 722.30 354.43 732.80 357.40 732.80 C358.93 732.80 360.47 719.70 362.00 719.70 C363.47 719.70 364.93 733.20 366.40 733.20 C368.37 733.20 370.33 731.53 372.30 728.20 C374.97 723.68 377.63 687.79 380.30 683.60 C383.27 678.93 386.23 680.46 389.20 676.60 C391.20 674.00 393.20 666.70 395.20 666.70 C398.50 666.70 401.80 669.00 405.10 673.60 C406.73 675.88 408.37 712.03 410.00 715.30 C412.67 720.63 415.33 723.30 418.00 723.30 C419.67 723.30 421.33 709.00 423.00 709.00 C424.63 709.00 426.27 714.90 427.90 714.90 C429.57 714.90 431.23 707.40 432.90 707.40 C435.73 707.40 438.57 727.41 441.40 729.20 C445.20 731.60 449.00 732.80 452.80 732.80 C454.43 732.80 456.07 729.63 457.70 723.30 C460.03 714.25 462.37 663.58 464.70 662.70 C466.47 662.03 468.23 662.04 470.00 661.70 C472.30 661.25 474.60 660.77 476.90 660.30 C479.20 659.83 481.50 658.90 483.80 658.90 C485.17 658.90 486.53 705.51 487.90 715.40 C489.30 725.53 490.70 730.60 492.10 730.60 C493.93 730.60 495.77 704.40 497.60 704.40 C499.43 704.40 501.27 704.87 503.10 705.80 C505.40 706.97 507.70 733.30 510.00 733.30 C512.77 733.30 515.53 733.30 518.30 733.30 C521.03 733.30 523.77 669.90 526.50 669.90 C528.80 669.90 531.10 670.83 533.40 672.70 C536.17 674.95 538.93 729.20 541.70 729.20 C544.47 729.20 547.23 683.70 550.00 683.70 C551.83 683.70 553.67 729.20 555.50 729.20 C558.23 729.20 560.97 727.80 563.70 727.80 C565.57 727.80 567.43 732.35 569.30 733.30 C572.97 735.17 576.63 736.10 580.30 736.10 C583.07 736.10 585.83 734.70 588.60 734.70 C589.97 734.70 591.33 736.10 592.70 737.50" fill="none" stroke="#db2777" stroke-width="1.7" stroke-linejoin="round" stroke-linecap="round"/><path d="M596.60 563.80 C597.97 651.80 599.33 739.80 600.70 739.80 C602.40 739.80 604.10 677.40 605.80 677.40 C608.43 677.40 611.07 681.53 613.70 687.40 C614.63 689.48 615.57 689.80 616.50 694.60 C617.70 700.77 618.90 726.20 620.10 726.20 C621.53 726.20 622.97 703.83 624.40 702.50 C628.00 699.17 631.60 697.50 635.20 697.50 C638.07 697.50 640.93 698.93 643.80 701.80 C646.67 704.67 649.53 723.30 652.40 723.30 C654.07 723.30 655.73 688.80 657.40 688.80 C658.60 688.80 659.80 708.05 661.00 710.40 C662.70 713.73 664.40 715.40 666.10 715.40 C667.77 715.40 669.43 694.37 671.10 693.90 C672.77 693.43 674.43 693.67 676.10 693.20 C677.77 692.73 679.43 683.10 681.10 683.10 C685.90 683.10 690.70 737.70 695.50 737.70 C698.37 737.70 701.23 687.40 704.10 687.40 C707.43 687.40 710.77 687.63 714.10 688.10 C717.23 688.54 720.37 696.00 723.50 696.00 C725.17 696.00 726.83 691.70 728.50 691.70 C729.93 691.70 731.37 693.13 732.80 696.00 C735.53 701.47 738.27 734.12 741.00 736.00 C743.03 737.40 745.07 738.10 747.10 738.10 C748.57 738.10 750.03 696.50 751.50 696.50 C752.97 696.50 754.43 735.13 755.90 739.00 C757.67 743.67 759.43 746.00 761.20 746.00 C762.97 746.00 764.73 721.30 766.50 721.30 C767.97 721.30 769.43 728.30 770.90 728.30 C772.37 728.30 773.83 710.70 775.30 710.70 C777.07 710.70 778.83 729.20 780.60 729.20 C783.57 729.20 786.53 727.50 789.50 727.50 C791.27 727.50 793.03 739.29 794.80 739.80 C796.87 740.40 798.93 740.70 801.00 740.70 C803.33 740.70 805.67 733.60 808.00 733.60 C809.77 733.60 811.53 741.60 813.30 741.60 C816.53 741.60 819.77 741.60 823.00 741.60 C824.20 741.60 825.40 716.90 826.60 716.90 C827.77 716.90 828.93 738.90 830.10 738.90 C831.87 738.90 833.63 718.65 835.40 710.70 C837.17 702.75 838.93 691.20 840.70 691.20 C842.47 691.20 844.23 750.93 846.00 763.70 C847.47 774.30 848.93 779.60 850.40 779.60 C851.87 779.60 853.33 739.80 854.80 739.80 C856.57 739.80 858.33 786.60 860.10 786.60 C861.60 786.60 863.10 785.73 864.60 784.00 C867.53 780.61 870.47 720.40 873.40 720.40 C875.47 720.40 877.53 729.44 879.60 735.40 C882.30 743.19 885.00 763.70 887.70 763.70 C890.63 763.70 893.57 736.30 896.50 736.30 C898.27 736.30 900.03 757.69 901.80 765.40 C903.27 771.80 904.73 780.50 906.20 780.50 C907.97 780.50 909.73 779.60 911.50 777.80 C912.97 776.31 914.43 726.60 915.90 726.60 C917.37 726.60 918.83 728.37 920.30 731.90 C922.07 736.16 923.83 754.80 925.60 754.80 C928.57 754.80 931.53 723.90 934.50 723.90 C936.27 723.90 938.03 734.03 939.80 737.20 C941.27 739.83 942.73 738.97 944.20 742.50 C945.67 746.03 947.13 780.50 948.60 780.50 C950.27 780.50 951.93 728.30 953.60 728.30 C955.17 728.30 956.73 789.30 958.30 789.30 C959.77 789.30 961.23 788.89 962.70 788.40 C964.20 787.90 965.70 786.30 967.20 786.30 C968.97 786.30 970.73 788.70 972.50 791.10" fill="none" stroke="#dc2626" stroke-width="1.7" stroke-linejoin="round" stroke-linecap="round"/><path d="M600.70 739.80 C602.40 691.55 604.10 643.31 605.80 642.20 C607.23 641.27 608.67 640.80 610.10 640.80 C612.00 640.80 613.90 642.47 615.80 645.80 C617.23 648.31 618.67 710.40 620.10 710.40 C622.73 710.40 625.37 667.80 628.00 663.00 C630.63 658.20 633.27 655.80 635.90 655.80 C638.53 655.80 641.17 657.23 643.80 660.10 C646.67 663.22 649.53 723.30 652.40 723.30 C654.23 723.30 656.07 672.30 657.90 672.30 C660.63 672.30 663.37 713.20 666.10 713.20 C668.00 713.20 669.90 680.20 671.80 680.20 C673.00 680.20 674.20 686.00 675.40 686.00 C677.30 686.00 679.20 652.20 681.10 652.20 C685.90 652.20 690.70 737.70 695.50 737.70 C698.60 737.70 701.70 660.90 704.80 660.90 C707.90 660.90 711.00 670.27 714.10 673.80 C716.03 676.00 717.97 675.92 719.90 679.50 C721.10 681.72 722.30 688.10 723.50 688.10 C726.60 688.10 729.70 667.30 732.80 667.30 C735.43 667.30 738.07 738.40 740.70 738.40 C742.83 738.40 744.97 737.70 747.10 736.30 C748.73 735.23 750.37 648.80 752.00 648.80 C753.60 648.80 755.20 733.66 756.80 738.10 C758.27 742.17 759.73 744.20 761.20 744.20 C762.97 744.20 764.73 714.96 766.50 710.70 C767.97 707.17 769.43 707.90 770.90 705.40 C772.37 702.90 773.83 695.70 775.30 695.70 C777.07 695.70 778.83 718.60 780.60 718.60 C783.57 718.60 786.53 715.10 789.50 715.10 C791.27 715.10 793.03 737.13 794.80 738.10 C796.87 739.23 798.93 739.80 801.00 739.80 C803.33 739.80 805.67 728.30 808.00 728.30 C809.77 728.30 811.53 741.60 813.30 741.60 C816.53 741.60 819.77 741.30 823.00 740.70 C824.20 740.48 825.40 693.90 826.60 693.90 C828.37 693.90 830.13 740.70 831.90 740.70 C833.37 740.70 834.83 659.93 836.30 659.40 C837.77 658.87 839.23 658.60 840.70 658.60 C841.87 658.60 843.03 734.33 844.20 746.00 C845.97 763.67 847.73 772.50 849.50 772.50 C851.27 772.50 853.03 700.10 854.80 700.10 C856.57 700.10 858.33 779.89 860.10 781.30 C861.60 782.50 863.10 783.10 864.60 783.10 C867.53 783.10 870.47 662.10 873.40 662.10 C875.47 662.10 877.53 731.90 879.60 731.90 C880.77 731.90 881.93 684.20 883.10 684.20 C884.63 684.20 886.17 696.50 887.70 696.50 C889.17 696.50 890.63 693.00 892.10 693.00 C895.33 693.00 898.57 763.70 901.80 763.70 C903.57 763.70 905.33 719.50 907.10 719.50 C908.57 719.50 910.03 777.80 911.50 777.80 C912.97 777.80 914.43 667.54 915.90 665.60 C917.67 663.27 919.43 662.10 921.20 662.10 C922.67 662.10 924.13 746.90 925.60 746.90 C927.27 746.90 928.93 671.80 930.60 671.80 C932.20 671.80 933.80 722.20 935.40 722.20 C936.87 722.20 938.33 671.80 939.80 671.80 C941.27 671.80 942.73 740.70 944.20 740.70 C945.67 740.70 947.13 716.90 948.60 716.90 C950.07 716.90 951.53 726.60 953.00 726.60 C954.77 726.60 956.53 724.80 958.30 724.80 C960.07 724.80 961.83 788.40 963.60 788.40 C964.97 788.40 966.33 701.80 967.70 701.80 C969.30 701.80 970.90 791.10 972.50 791.10 C975.60 791.10 978.70 718.60 981.80 718.60 C983.40 718.60 985.00 791.10 986.60 791.10 C988.23 791.10 989.87 720.40 991.50 720.40 C993.07 720.40 994.63 740.70 996.20 740.70 C997.67 740.70 999.13 697.40 1000.60 697.40 C1002.23 697.40 1003.87 791.10 1005.50 791.10 C1007.10 791.10 1008.70 714.20 1010.30 714.20 C1012.07 714.20 1013.83 791.10 1015.60 791.10 C1016.80 791.10 1018.00 791.10 1019.20 791.10 C1020.97 791.10 1022.73 721.30 1024.50 721.30 C1025.97 721.30 1027.43 791.10 1028.90 791.10 C1030.37 791.10 1031.83 712.40 1033.30 712.40 C1035.07 712.40 1036.83 791.10 1038.60 791.10 C1040.07 791.10 1041.53 791.10 1043.00 791.10 C1044.47 791.10 1045.93 717.70 1047.40 717.70 C1049.17 717.70 1050.93 791.10 1052.70 791.10 C1054.17 791.10 1055.63 722.20 1057.10 722.20 C1058.60 722.20 1060.10 731.90 1061.60 731.90 C1063.17 731.90 1064.73 703.60 1066.30 703.60 C1067.97 703.60 1069.63 791.10 1071.30 791.10 C1072.77 791.10 1074.23 721.30 1075.70 721.30 C1077.47 721.30 1079.23 789.30 1081.00 789.30 C1082.47 789.30 1083.93 780.50 1085.40 780.50 C1086.87 780.50 1088.33 784.05 1089.80 787.60" fill="none" stroke="#129e8e" stroke-width="1.7" stroke-linejoin="round" stroke-linecap="round"/></g>
<g id="ref" stroke="#616161" stroke-width="1.6" stroke-dasharray="2.8 2.7">
  <path d="M85 216.4H1098M85 222.9H1098"/>
  <path d="M85 563.4H1098M85 689H1098"/>
</g>
<!-- brush -->
<rect x="85.5" y="850.5" width="1013" height="36" fill="#dcdce0" stroke="#6b6b72" stroke-width="1"/>
<rect x="85" y="850" width="9.5" height="37" fill="#6b6b72"/>
<rect x="1089.5" y="850" width="9.5" height="37" fill="#6b6b72"/>
<path d="M87 866.5h6M87 869.5h6M1091.5 866.5h6M1091.5 869.5h6" stroke="#f2f2f2" stroke-width="0.9"/>
</svg>

<!-- y labels mem -->
<div class="yl" style="top:191px;">9.06 GB</div>
<div class="yl" style="top:310px;">4.66 GB</div>
<div class="yl" style="top:375px;">2.33 GB</div>
<div class="yl" style="top:439px;">0 B</div>
<div class="a" style="left:90px;top:225px;font-size:11.4px;color:#666;">Capacity: 8 GB</div>
<div class="a" style="left:989px;top:219px;font-size:11.3px;color:#666;">Peak usage: 8.24 GB</div>

<!-- y labels cpu -->
<div class="yl" style="top:538px;">974.12%</div>
<div class="yl" style="top:657px;">500%</div>
<div class="yl" style="top:722px;">250%</div>
<div class="yl" style="top:786px;">0%</div>
<div class="a" style="left:90px;top:691px;font-size:11.5px;color:#666;">Capacity: 400%</div>
<div class="a" style="left:983px;top:566px;font-size:11.3px;color:#666;">Peak usage: 885.56%</div>

<div class="xl" style="left:94.3px;top:456px;">13:25:49</div>
<div class="xl" style="left:146.4px;top:456px;">13:26:00</div>
<div class="xl" style="left:197.9px;top:456px;">13:26:11</div>
<div class="xl" style="left:245.3px;top:456px;">13:26:21</div>
<div class="xl" style="left:296.6px;top:456px;">13:26:33</div>
<div class="xl" style="left:347.9px;top:456px;">13:26:44</div>
<div class="xl" style="left:399.4px;top:456px;">13:26:55</div>
<div class="xl" style="left:450.7px;top:456px;">13:27:06</div>
<div class="xl" style="left:502.2px;top:456px;">13:27:17</div>
<div class="xl" style="left:554.4px;top:456px;">13:27:28</div>
<div class="xl" style="left:605.8px;top:456px;">13:27:39</div>
<div class="xl" style="left:658.2px;top:456px;">13:27:51</div>
<div class="xl" style="left:709.5px;top:456px;">13:28:02</div>
<div class="xl" style="left:761.0px;top:456px;">13:28:13</div>
<div class="xl" style="left:812.9px;top:456px;">13:28:24</div>
<div class="xl" style="left:864.7px;top:456px;">13:28:35</div>
<div class="xl" style="left:916.0px;top:456px;">13:28:47</div>
<div class="xl" style="left:967.0px;top:456px;">13:28:58</div>
<div class="xl" style="left:1018.9px;top:456px;">13:29:09</div>
<div class="xl" style="left:1081.2px;top:456px;">13:29:24</div>
<div class="xl" style="left:94.3px;top:803px;">13:25:49</div>
<div class="xl" style="left:146.4px;top:803px;">13:26:00</div>
<div class="xl" style="left:197.9px;top:803px;">13:26:11</div>
<div class="xl" style="left:245.3px;top:803px;">13:26:21</div>
<div class="xl" style="left:296.6px;top:803px;">13:26:33</div>
<div class="xl" style="left:347.9px;top:803px;">13:26:44</div>
<div class="xl" style="left:399.4px;top:803px;">13:26:55</div>
<div class="xl" style="left:450.7px;top:803px;">13:27:06</div>
<div class="xl" style="left:502.2px;top:803px;">13:27:17</div>
<div class="xl" style="left:554.4px;top:803px;">13:27:28</div>
<div class="xl" style="left:605.8px;top:803px;">13:27:39</div>
<div class="xl" style="left:658.2px;top:803px;">13:27:51</div>
<div class="xl" style="left:709.5px;top:803px;">13:28:02</div>
<div class="xl" style="left:761.0px;top:803px;">13:28:13</div>
<div class="xl" style="left:812.9px;top:803px;">13:28:24</div>
<div class="xl" style="left:864.7px;top:803px;">13:28:35</div>
<div class="xl" style="left:916.0px;top:803px;">13:28:47</div>
<div class="xl" style="left:967.0px;top:803px;">13:28:58</div>
<div class="xl" style="left:1018.9px;top:803px;">13:29:09</div>
<div class="xl" style="left:1081.2px;top:803px;">13:29:24</div>

</body></html>
